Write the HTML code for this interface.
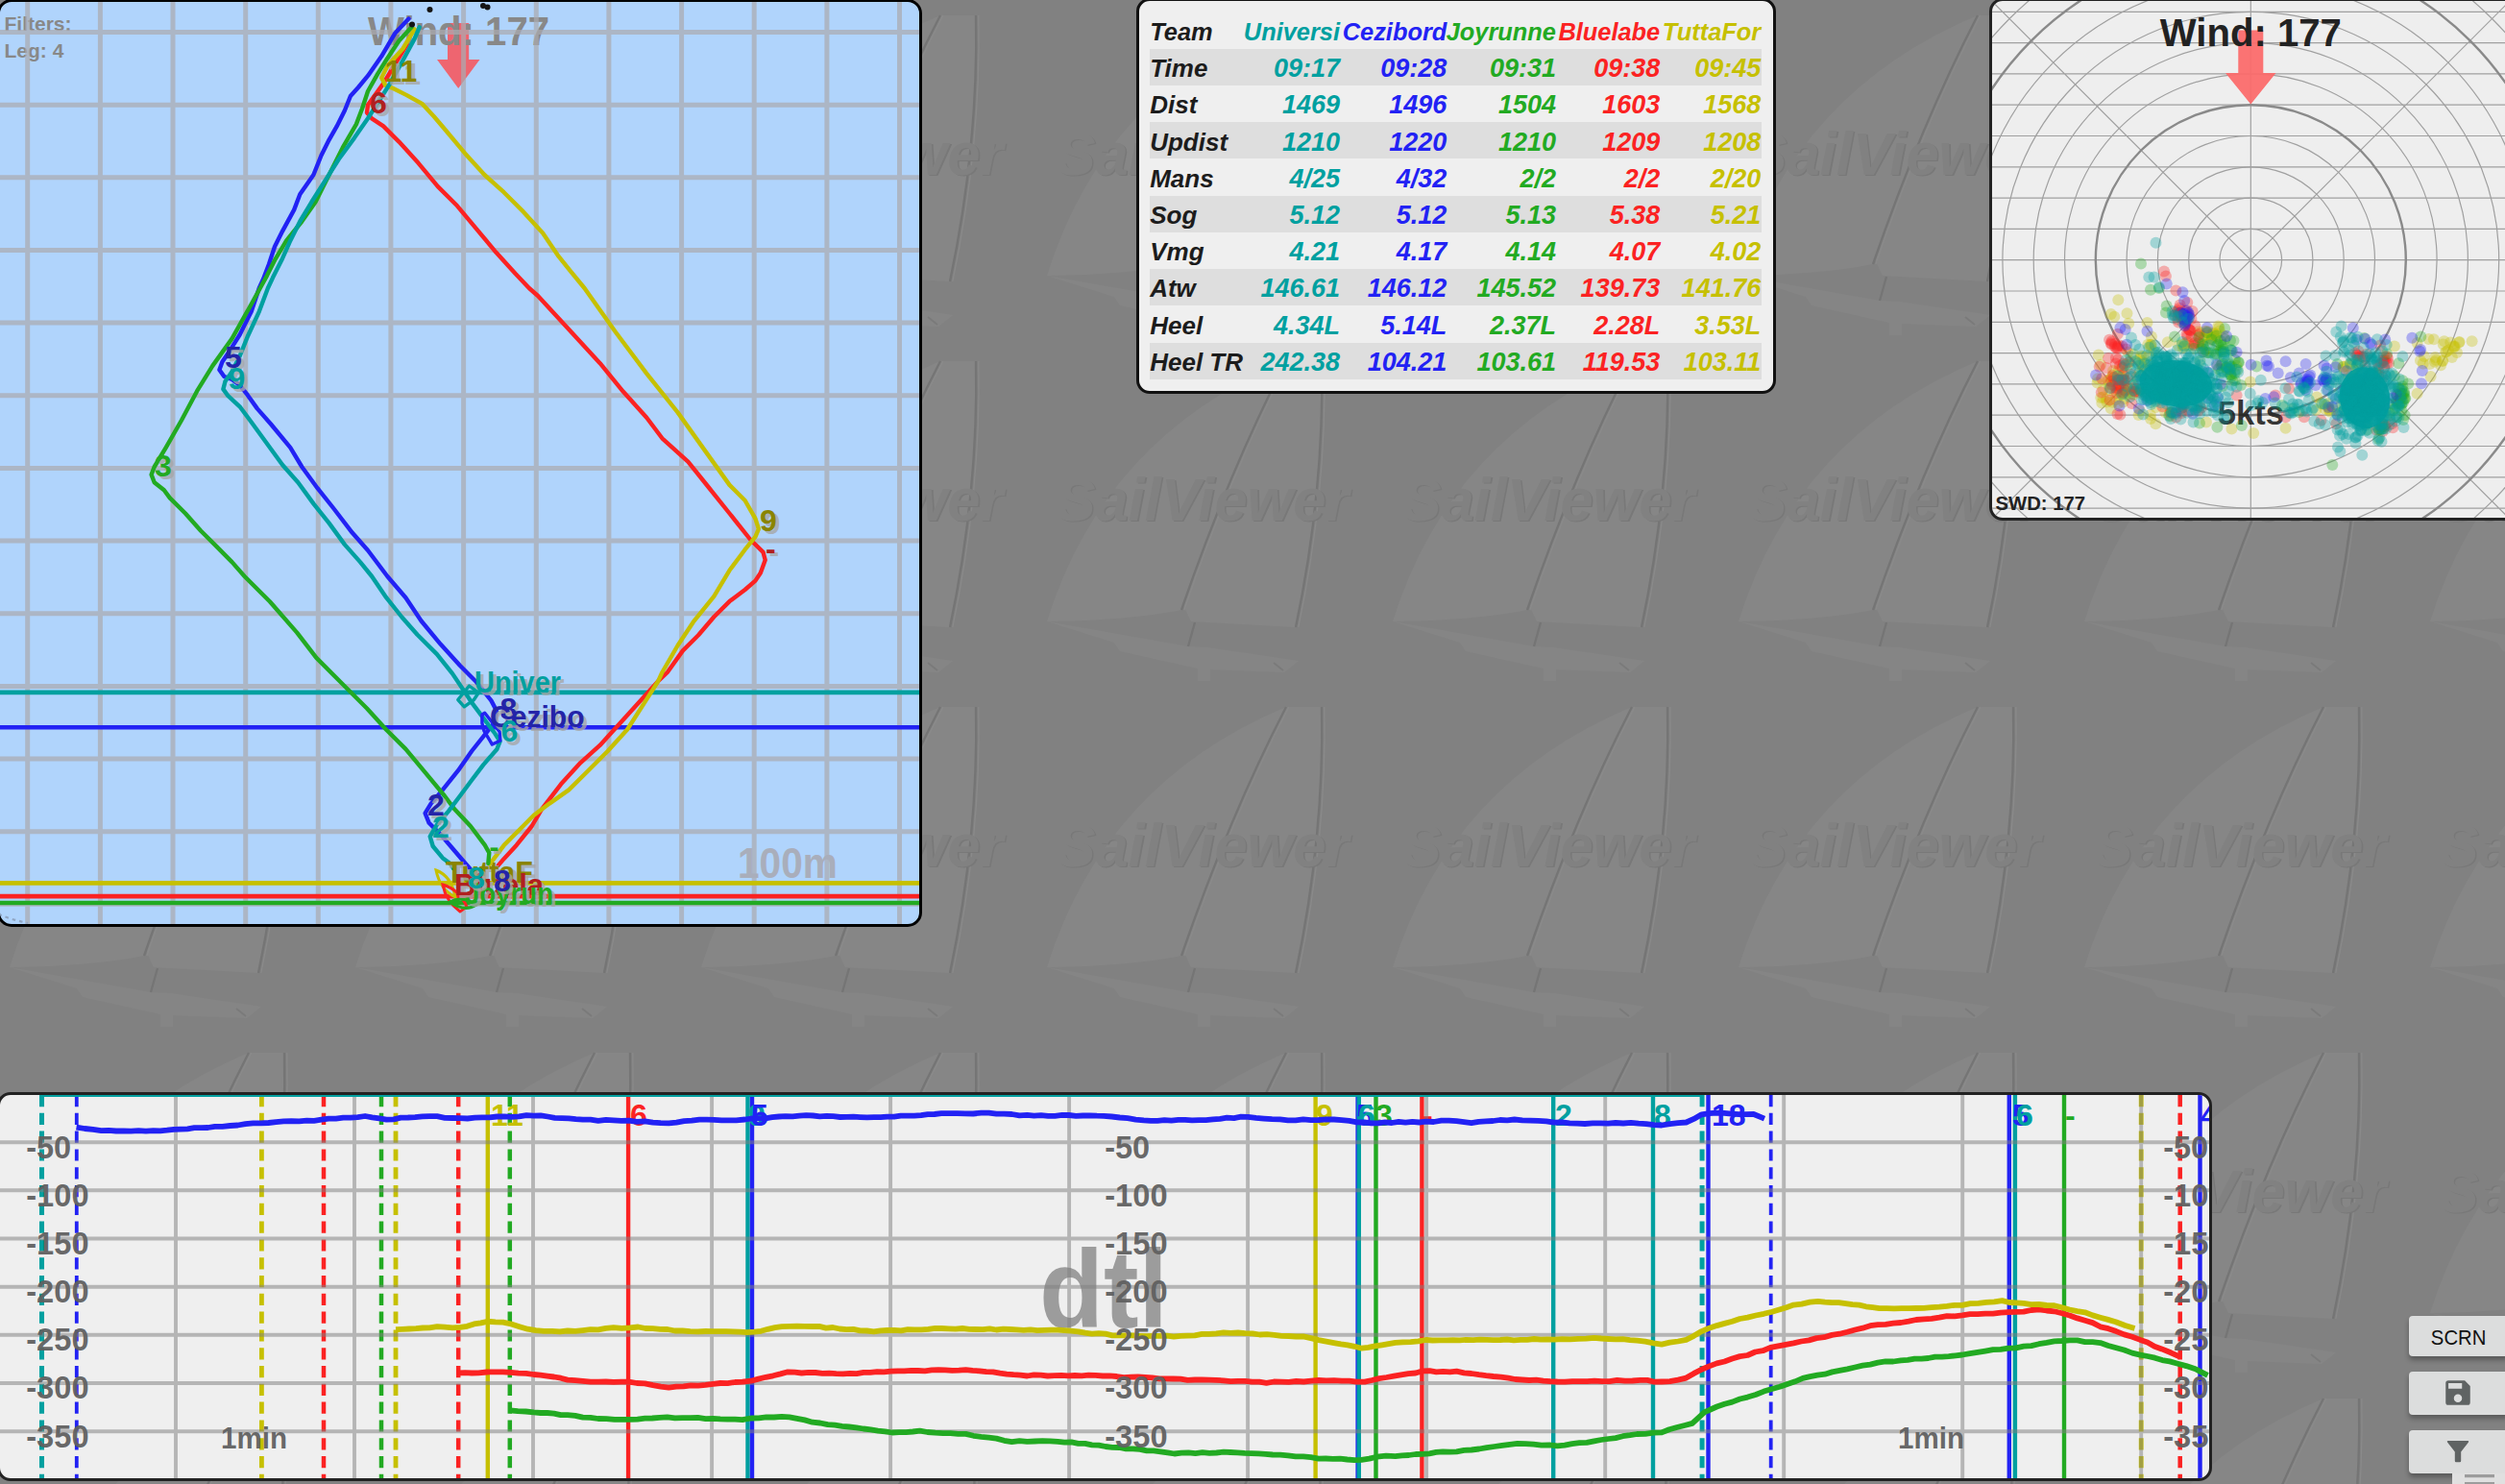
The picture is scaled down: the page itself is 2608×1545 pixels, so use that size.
<!DOCTYPE html>
<html lang="en"><head><meta charset="utf-8"><title>SailViewer</title>
<style>
html,body{margin:0;padding:0}
body{width:2608px;height:1545px;overflow:hidden;position:relative;background:#818181;font-family:"Liberation Sans",sans-serif}
.abs{position:absolute}
svg{position:absolute;left:0;top:0;overflow:hidden}
svg text{font-family:"Liberation Sans",sans-serif;font-weight:bold}
#map{left:-3px;top:-1px;width:957px;height:960px;border:3px solid #000;border-radius:15px;background:#b0d4fc;overflow:hidden}
#tbl{left:1182.5px;top:-2px;width:660px;height:405.5px;border:3px solid #111;border-radius:14px;background:#efefef;overflow:hidden;font-weight:bold;font-style:italic}
#pol{left:2071px;top:-2px;width:560px;height:538px;border:3px solid #222;border-radius:14px;background:#eeeeee;overflow:hidden}
#cht{left:-3px;top:1136.5px;width:2300px;height:399px;border:3px solid #222;border-radius:14px;background:#efefef;overflow:hidden}
.row{position:absolute;left:11.5px;width:637px;height:38.2px;line-height:38.2px;white-space:nowrap}
.row.s{background:#dedede}
.row span{position:absolute;top:1.4px;text-align:right;font-size:27px}
.row span.l{left:0.2px;text-align:left;font-size:26px;color:#1c1c1c}
.row.h span{font-size:25.4px}
.btn{position:absolute;left:2508px;width:104px;background:#dcdddd;border-radius:4px;box-shadow:0 4px 5px rgba(0,0,0,.3);text-align:center;color:#111}
</style></head><body>
<svg width="2608" height="1545" viewBox="0 0 2608 1545">
<defs><pattern id="wm" width="360" height="360" patternUnits="userSpaceOnUse">
<rect width="360" height="360" fill="#818181"/>
<path d="M259,16 Q70,95 10,287 Q95,286 150,275 Q200,130 259,16Z" fill="#868686"/>
<path d="M259,16 L296,16 Q299,150 269,293 L160,287 L152,270 Q200,130 259,16Z" fill="#868686"/>
<path d="M10,287 L80,309 L86,318 L167,336 L167,349 L180,349 L180,337 L257,340 L272,328 L177,314 L157,313Z" fill="#858585"/>
<path d="M260,16 Q201,130 151,275 M297,16 Q300,150 270,293" fill="none" stroke="#8a8a8a" stroke-width="1.2" transform="translate(1.8,0)"/>
<path d="M259,16 Q200,130 150,275 M296,16 Q299,150 269,293 M164,288 L157,313" fill="none" stroke="#757575" stroke-width="2.4"/>
<path d="M246,330 L256,338" fill="none" stroke="#7a7a7a" stroke-width="2"/>
<g transform="translate(19.5,182) scale(1,1.04)"><text x="1.6" y="1" font-size="61.4" font-style="italic" fill="#787878" style="font-weight:bold">SailViewer</text>
<text x="0" y="0" font-size="61.4" font-style="italic" fill="#818181" style="font-weight:bold">SailViewer</text></g>
</pattern></defs>
<rect width="2608" height="1545" fill="url(#wm)"/>
</svg>
<div id="map" class="abs"><svg width="960" height="965" viewBox="0 2 960 965" style="left:0;top:0"><path d="M466,24H488.2V62H499.5L477.2,92L455,62H466Z" fill="#ee6570"/><text x="383" y="47" font-size="42.5" fill="#888888" textLength="189" lengthAdjust="spacingAndGlyphs">Wind: 177</text><text x="4.5" y="31.5" font-size="21" fill="#888888">Filters:</text><text x="4.5" y="59.5" font-size="21" fill="#888888">Leg: 4</text><path d="M28.7,-5V970M-5,33.5H965M104.4,-5V970M-5,109.2H965M180.0,-5V970M-5,184.8H965M255.7,-5V970M-5,260.5H965M331.3,-5V970M-5,336.1H965M406.9,-5V970M-5,411.8H965M482.6,-5V970M-5,487.4H965M558.3,-5V970M-5,563.1H965M633.9,-5V970M-5,638.7H965M709.6,-5V970M-5,714.4H965M785.2,-5V970M-5,790.0H965M860.9,-5V970M-5,865.7H965M936.5,-5V970M-5,941.3H965" stroke="#aaaab0" stroke-opacity=".72" stroke-width="5" fill="none"/><text x="768" y="914" font-size="45" fill="#a9aebb" textLength="104" lengthAdjust="spacingAndGlyphs">100m</text><path d="M-5,720.9H965" stroke="#00a0a0" stroke-width="4.6"/><path d="M-5,757.3H965" stroke="#2222f4" stroke-width="4.6"/><path d="M-5,919.4H965" stroke="#c6c000" stroke-width="4.6"/><path d="M-5,933.1H965" stroke="#fb2222" stroke-width="4.6"/><path d="M-5,940H965" stroke="#22aa22" stroke-width="4.6"/><polyline points="425.5,19.6 411.4,34.4 397.2,58.6 383.0,78.9 373.0,91.0 364.9,100.0 358.8,115.2 350.7,131.4 342.6,145.6 334.5,161.7 326.4,182.0 312.3,202.2 306.2,218.4 294.1,240.6 286.0,256.8 280.0,275.0 273.9,291.0 269.8,300.0 261.7,324.3 249.6,348.5 239.5,364.7 231.4,376.8 228.4,384.9 233.4,392.0 241.5,395.0 249.6,401.1 257.7,411.2 267.8,425.4 282.0,441.5 302.2,465.8 314.3,486.0 330.5,508.2 346.7,528.5 366.9,554.8 383.0,573.0 403.3,600.0 422.4,622.2 438.6,646.5 458.8,670.8 479.0,693.0 495.2,709.2 511.4,729.4 517.0,740.0 515.0,752.0 507.3,761.7 491.1,782.0 477.0,802.2 460.8,822.4 448.7,836.6 442.6,846.7 446.7,856.8 458.8,868.9 470.9,883.0 483.1,897.2 489.8,904.9" fill="none" stroke="#2222f4" stroke-width="4.4" stroke-linejoin="round" stroke-linecap="round"/><polyline points="423.5,46.5 399.2,86.9 383.0,109.2 382.0,117.3 387.1,123.3 399.2,131.4 415.4,147.6 435.6,169.8 455.8,194.1 476.0,214.3 496.3,238.6 516.5,262.8 536.7,285.1 550.9,300.0 560.0,308.0 592.3,343.1 624.7,378.2 648.9,407.8 673.2,434.8 689.4,456.3 716.3,480.6 737.9,507.5 759.5,534.5 781.0,561.5 794.5,574.9 796.7,583.0 791.8,596.5 786.4,604.6 775.6,614.0 759.5,626.1 743.3,642.3 727.1,661.2 710.9,677.4 694.8,700.0 685.2,709.2 665.0,731.4 644.8,753.7 624.6,775.9 604.4,794.1 584.1,816.3 563.9,842.6 553.7,860.0 537.7,879.9 524.8,893.9 518.8,900.9" fill="none" stroke="#fb2222" stroke-width="4.4" stroke-linejoin="round" stroke-linecap="round"/><polyline points="431.6,30.3 419.5,50.5 403.3,68.7 397.2,80.9 401.3,89.0 409.3,92.0 423.5,99.1 439.7,108.2 451.8,121.3 463.9,135.5 484.1,159.7 504.4,182.0 524.6,200.2 544.8,220.4 565.0,242.6 581.6,266.9 593.6,281.9 608.5,300.0 640.9,345.8 673.2,388.9 705.6,429.4 732.5,467.1 759.5,504.9 775.6,521.0 786.4,539.9 789.9,550.7 786.4,558.8 775.6,572.2 759.5,593.8 743.3,620.8 721.7,647.7 705.6,672.0 689.4,700.0 685.2,709.2 671.1,731.4 652.9,759.7 632.7,782.0 612.5,802.2 592.2,822.4 572.0,836.6 555.8,848.7 544.7,860.0 524.8,879.9 509.8,899.9" fill="none" stroke="#c6c000" stroke-width="4.4" stroke-linejoin="round" stroke-linecap="round"/><polyline points="428.5,28.3 415.4,42.5 403.3,60.7 393.2,76.8 383.0,95.0 377.0,113.2 370.9,129.4 356.8,153.7 342.6,182.0 328.5,210.3 314.3,230.5 298.1,250.7 286.0,270.9 277.9,287.1 270.8,300.0 259.7,320.2 241.5,352.6 221.3,380.9 205.1,407.2 189.0,437.5 172.8,465.8 160.7,486.0 157.6,494.1 160.7,502.2 170.8,510.3 176.8,518.4 193.0,534.5 209.2,552.7 225.4,568.9 241.5,585.1 254.6,600.0 280.9,626.3 309.2,658.6 329.4,684.9 357.7,713.2 382.0,737.5 402.2,759.7 422.4,779.9 442.6,804.2 462.8,828.5 472.9,842.0 489.8,860.0 504.8,879.9 509.3,887.9 508.3,898.9" fill="none" stroke="#22aa22" stroke-width="4.4" stroke-linejoin="round" stroke-linecap="round"/><polyline points="436.6,28.3 431.6,40.4 419.5,62.7 407.3,84.9 397.2,101.1 383.0,123.3 368.9,143.6 352.7,165.8 338.6,188.0 324.4,210.3 312.3,230.5 302.2,250.7 294.1,268.9 284.0,289.1 278.9,300.0 269.8,324.3 257.7,350.5 249.6,370.8 241.5,386.9 234.5,397.0 232.4,405.1 237.5,412.2 249.6,423.3 261.7,439.5 277.9,461.7 294.1,484.0 310.3,502.2 326.4,524.4 342.6,544.6 358.8,566.9 375.0,585.1 387.1,600.0 402.2,622.2 418.4,642.5 434.5,660.7 454.7,680.9 470.9,701.1 483.1,719.3 491.1,731.4 503.3,747.6 515.4,763.8 520.5,771.9 517.4,780.0 503.3,796.1 491.1,812.3 479.0,828.5 466.9,844.6 454.7,858.8 447.7,870.9 450.7,881.0 460.8,893.2 469.9,899.9 471.9,903.9" fill="none" stroke="#00a0a0" stroke-width="4.4" stroke-linejoin="round" stroke-linecap="round"/><path d="M476.8,728.5 L488.5,714 L498.2,721.2 L493.4,728.5 L483.3,735.8Z" fill="none" stroke="#00a0a0" stroke-width="3.4" stroke-linejoin="round"/><path d="M501.9,743.9 L504.7,742.3 L520.1,761.7 L520.9,771 L512.4,775 L503.9,760.9 L501.9,752.8Z" fill="none" stroke="#2222f4" stroke-width="3.4" stroke-linejoin="round"/><path d="M454,906 Q470,912 474,934 Q458,926 454,906Z" fill="none" stroke="#c6c000" stroke-width="3"/><path d="M461,921 Q478,926 486,944 L479,949 Q464,938 461,921Z" fill="none" stroke="#fb2222" stroke-width="3"/><path d="M468,939 Q482,932 496,942 Q484,950 468,939Z" fill="none" stroke="#22aa22" stroke-width="3"/><path d="M-1.5,951.8 Q12,957.5 29,961" fill="none" stroke="#90a6c4" stroke-width="2.2" stroke-dasharray="3.6 4"/><circle cx="447.5" cy="10" r="3" fill="#151515"/><circle cx="503" cy="6" r="3" fill="#151515"/><circle cx="507.5" cy="7.5" r="3" fill="#151515"/><circle cx="429" cy="25.5" r="3" fill="#151515"/><text x="404.1" y="88.4" font-size="32" fill="#a6a6a6" fill-opacity=".8">11</text><text x="400.5" y="85" font-size="32" fill="#8a8400">11</text><text x="388.6" y="121.4" font-size="32" fill="#a6a6a6" fill-opacity=".8">6</text><text x="385" y="118" font-size="32" fill="#b02020">6</text><text x="237.6" y="386.4" font-size="32" fill="#a6a6a6" fill-opacity=".8">5</text><text x="234" y="383" font-size="32" fill="#2424a8">5</text><text x="241.1" y="408.4" font-size="32" fill="#a6a6a6" fill-opacity=".8">9</text><text x="237.5" y="405" font-size="32" fill="#00a0a0">9</text><text x="164.6" y="499.4" font-size="32" fill="#a6a6a6" fill-opacity=".8">3</text><text x="161" y="496" font-size="32" fill="#22aa22">3</text><text x="794.6" y="556.4" font-size="32" fill="#a6a6a6" fill-opacity=".8">9</text><text x="791" y="553" font-size="32" fill="#8a8400">9</text><text x="800.6" y="585.4" font-size="32" fill="#a6a6a6" fill-opacity=".8">-</text><text x="797" y="582" font-size="32" fill="#b02020">-</text><text x="497.6" y="724.4" font-size="31" fill="#a6a6a6" fill-opacity=".8" textLength="90" lengthAdjust="spacingAndGlyphs">Univer</text><text x="494" y="721" font-size="31" fill="#00a0a0" textLength="90" lengthAdjust="spacingAndGlyphs">Univer</text><text x="524.1" y="752.4" font-size="32" fill="#a6a6a6" fill-opacity=".8">8</text><text x="520.5" y="749" font-size="32" fill="#2424a8">8</text><text x="513.6" y="760.6" font-size="31" fill="#a6a6a6" fill-opacity=".8" textLength="98.5" lengthAdjust="spacingAndGlyphs">Cezibo</text><text x="510" y="757.2" font-size="31" fill="#2424a8" textLength="98.5" lengthAdjust="spacingAndGlyphs">Cezibo</text><text x="525.1" y="775.6999999999999" font-size="32" fill="#a6a6a6" fill-opacity=".8">6</text><text x="521.5" y="772.3" font-size="32" fill="#00a0a0">6</text><text x="448.6" y="852.4" font-size="32" fill="#a6a6a6" fill-opacity=".8">2</text><text x="445" y="849" font-size="32" fill="#2424a8">2</text><text x="453.6" y="875.4" font-size="32" fill="#a6a6a6" fill-opacity=".8">2</text><text x="450" y="872" font-size="32" fill="#00a0a0">2</text><text x="513.1" y="895.4" font-size="30" fill="#a6a6a6" fill-opacity=".8">-</text><text x="509.5" y="892" font-size="30" fill="#22aa22">-</text><text x="467.6" y="922.4" font-size="31" fill="#a6a6a6" fill-opacity=".8" textLength="91" lengthAdjust="spacingAndGlyphs">TuttaF</text><text x="464" y="919" font-size="31" fill="#8a8400" textLength="91" lengthAdjust="spacingAndGlyphs">TuttaF</text><text x="476.6" y="935.4" font-size="31" fill="#a6a6a6" fill-opacity=".8" textLength="93" lengthAdjust="spacingAndGlyphs">Bluela</text><text x="473" y="932" font-size="31" fill="#b02020" textLength="93" lengthAdjust="spacingAndGlyphs">Bluela</text><text x="487.6" y="944.4" font-size="31" fill="#a6a6a6" fill-opacity=".8" textLength="92" lengthAdjust="spacingAndGlyphs">Joyrun</text><text x="484" y="941" font-size="31" fill="#22aa22" textLength="92" lengthAdjust="spacingAndGlyphs">Joyrun</text><text x="490.6" y="928.4" font-size="32" fill="#a6a6a6" fill-opacity=".8">8</text><text x="487" y="925" font-size="32" fill="#00a0a0">8</text><text x="517.6" y="931.4" font-size="32" fill="#a6a6a6" fill-opacity=".8">8</text><text x="514" y="928" font-size="32" fill="#2424a8">8</text></svg></div>
<div id="tbl" class="abs"><div class="row h" style="top:11.7px"><span class="l">Team</span><span style="right:439.0px;color:#00a0a0">Universi</span><span style="right:327.7px;color:#2222f4">Cezibord</span><span style="right:214.0px;color:#22aa22">Joyrunne</span><span style="right:105.8px;color:#fb2222">Bluelabe</span><span style="right:0.8px;color:#c6c000">TuttaFor</span></div><div class="row s" style="top:49.9px"><span class="l">Time</span><span style="right:439.0px;color:#00a0a0">09:17</span><span style="right:327.7px;color:#2222f4">09:28</span><span style="right:214.0px;color:#22aa22">09:31</span><span style="right:105.8px;color:#fb2222">09:38</span><span style="right:0.8px;color:#c6c000">09:45</span></div><div class="row" style="top:88.1px"><span class="l">Dist</span><span style="right:439.0px;color:#00a0a0">1469</span><span style="right:327.7px;color:#2222f4">1496</span><span style="right:214.0px;color:#22aa22">1504</span><span style="right:105.8px;color:#fb2222">1603</span><span style="right:0.8px;color:#c6c000">1568</span></div><div class="row s" style="top:126.3px"><span class="l">Updist</span><span style="right:439.0px;color:#00a0a0">1210</span><span style="right:327.7px;color:#2222f4">1220</span><span style="right:214.0px;color:#22aa22">1210</span><span style="right:105.8px;color:#fb2222">1209</span><span style="right:0.8px;color:#c6c000">1208</span></div><div class="row" style="top:164.5px"><span class="l">Mans</span><span style="right:439.0px;color:#00a0a0">4/25</span><span style="right:327.7px;color:#2222f4">4/32</span><span style="right:214.0px;color:#22aa22">2/2</span><span style="right:105.8px;color:#fb2222">2/2</span><span style="right:0.8px;color:#c6c000">2/20</span></div><div class="row s" style="top:202.7px"><span class="l">Sog</span><span style="right:439.0px;color:#00a0a0">5.12</span><span style="right:327.7px;color:#2222f4">5.12</span><span style="right:214.0px;color:#22aa22">5.13</span><span style="right:105.8px;color:#fb2222">5.38</span><span style="right:0.8px;color:#c6c000">5.21</span></div><div class="row" style="top:240.9px"><span class="l">Vmg</span><span style="right:439.0px;color:#00a0a0">4.21</span><span style="right:327.7px;color:#2222f4">4.17</span><span style="right:214.0px;color:#22aa22">4.14</span><span style="right:105.8px;color:#fb2222">4.07</span><span style="right:0.8px;color:#c6c000">4.02</span></div><div class="row s" style="top:279.1px"><span class="l">Atw</span><span style="right:439.0px;color:#00a0a0">146.61</span><span style="right:327.7px;color:#2222f4">146.12</span><span style="right:214.0px;color:#22aa22">145.52</span><span style="right:105.8px;color:#fb2222">139.73</span><span style="right:0.8px;color:#c6c000">141.76</span></div><div class="row" style="top:317.3px"><span class="l">Heel</span><span style="right:439.0px;color:#00a0a0">4.34L</span><span style="right:327.7px;color:#2222f4">5.14L</span><span style="right:214.0px;color:#22aa22">2.37L</span><span style="right:105.8px;color:#fb2222">2.28L</span><span style="right:0.8px;color:#c6c000">3.53L</span></div><div class="row s" style="top:355.5px"><span class="l">Heel TR</span><span style="right:439.0px;color:#00a0a0">242.38</span><span style="right:327.7px;color:#2222f4">104.21</span><span style="right:214.0px;color:#22aa22">103.61</span><span style="right:105.8px;color:#fb2222">119.53</span><span style="right:0.8px;color:#c6c000">103.11</span></div></div>
<div id="pol" class="abs"><svg width="560" height="540" viewBox="2074 1 560 540"><g fill="none" stroke="#a0a0a0" stroke-width="1.2"><circle cx="2343.3" cy="270.7" r="32.3"/><circle cx="2343.3" cy="270.7" r="64.6"/><circle cx="2343.3" cy="270.7" r="96.9"/><circle cx="2343.3" cy="270.7" r="129.2"/><circle cx="2343.3" cy="270.7" r="193.8"/><circle cx="2343.3" cy="270.7" r="226.1"/><circle cx="2343.3" cy="270.7" r="258.4"/><circle cx="2343.3" cy="270.7" r="290.7"/><circle cx="2343.3" cy="270.7" r="355.3"/><circle cx="2343.3" cy="270.7" r="387.6"/><circle cx="2343.3" cy="270.7" r="419.9"/><path d="M2070,-20.0H2640M2070,12.3H2640M2070,44.6H2640M2070,76.9H2640M2070,109.2H2640M2070,141.5H2640M2070,173.8H2640M2070,206.1H2640M2070,238.4H2640M2070,270.7H2640M2070,303.0H2640M2070,335.3H2640M2070,367.6H2640M2070,399.9H2640M2070,432.2H2640M2070,464.5H2640M2070,496.8H2640M2070,529.1H2640M2070,561.4H2640M2343.3,-5V545M1943.3000000000002,-129.3L2743.3,670.7M1943.3000000000002,670.7L2743.3,-129.3"/></g><g fill="none" stroke="#8a8a8a" stroke-width="2.4"><circle cx="2343.3" cy="270.7" r="161.5"/><circle cx="2343.3" cy="270.7" r="323.0"/></g><text x="2343.3" y="441.5" font-size="34.5" fill="#1c1c1c" fill-opacity=".9" text-anchor="middle">5kts</text><g fill="#c6c000" fill-opacity=".32"><circle cx="2205.3" cy="312.2" r="6"/><circle cx="2197.8" cy="327.1" r="6"/><circle cx="2214.5" cy="326.3" r="6"/><circle cx="2201.3" cy="329.8" r="6"/><circle cx="2216.2" cy="336.8" r="6"/><circle cx="2235.5" cy="335.9" r="6"/><circle cx="2239.0" cy="358.8" r="6"/><circle cx="2242.6" cy="365.8" r="6"/><circle cx="2239.0" cy="436.1" r="6"/><circle cx="2244.3" cy="441.3" r="6"/><circle cx="2297.0" cy="439.6" r="6"/><circle cx="2323.4" cy="446.6" r="6"/><circle cx="2346.2" cy="451.0" r="6"/><circle cx="2379.6" cy="445.7" r="6"/><circle cx="2328.6" cy="380.7" r="6"/><circle cx="2342.7" cy="397.4" r="6"/><circle cx="2492.9" cy="360.5" r="6"/><circle cx="2516.6" cy="357.0" r="6"/><circle cx="2530.6" cy="392.1" r="6"/><circle cx="2516.6" cy="409.7" r="6"/><circle cx="2485.0" cy="434.3" r="6"/><circle cx="2502.5" cy="415.0" r="6"/><circle cx="2193.4" cy="418.5" r="6"/><circle cx="2202.1" cy="409.4" r="6"/><circle cx="2202.4" cy="398.5" r="6"/><circle cx="2195.0" cy="399.9" r="6"/><circle cx="2216.5" cy="408.3" r="6"/><circle cx="2215.7" cy="406.0" r="6"/><circle cx="2209.0" cy="405.1" r="6"/><circle cx="2187.2" cy="413.9" r="6"/><circle cx="2210.1" cy="409.3" r="6"/><circle cx="2187.0" cy="379.7" r="6"/><circle cx="2195.4" cy="396.5" r="6"/><circle cx="2208.0" cy="402.1" r="6"/><circle cx="2210.3" cy="394.2" r="6"/><circle cx="2208.0" cy="407.9" r="6"/><circle cx="2197.8" cy="425.3" r="6"/><circle cx="2210.7" cy="418.4" r="6"/><circle cx="2198.3" cy="392.9" r="6"/><circle cx="2201.2" cy="401.3" r="6"/><circle cx="2211.5" cy="406.0" r="6"/><circle cx="2200.1" cy="390.1" r="6"/><circle cx="2199.3" cy="418.8" r="6"/><circle cx="2196.3" cy="405.9" r="6"/><circle cx="2209.3" cy="383.1" r="6"/><circle cx="2205.3" cy="419.9" r="6"/><circle cx="2183.6" cy="398.4" r="6"/><circle cx="2203.7" cy="391.9" r="6"/><circle cx="2210.0" cy="401.9" r="6"/><circle cx="2189.4" cy="413.6" r="6"/><circle cx="2211.8" cy="415.1" r="6"/><circle cx="2220.0" cy="407.5" r="6"/><circle cx="2206.0" cy="385.6" r="6"/><circle cx="2211.3" cy="394.6" r="6"/><circle cx="2200.0" cy="386.0" r="6"/><circle cx="2194.6" cy="395.7" r="6"/><circle cx="2218.4" cy="375.9" r="6"/><circle cx="2189.4" cy="405.8" r="6"/><circle cx="2220.0" cy="410.3" r="6"/><circle cx="2184.8" cy="369.5" r="6"/><circle cx="2208.6" cy="393.0" r="6"/><circle cx="2193.0" cy="415.6" r="6"/><circle cx="2216.4" cy="404.8" r="6"/><circle cx="2207.4" cy="408.4" r="6"/><circle cx="2221.6" cy="410.8" r="6"/><circle cx="2210.3" cy="409.9" r="6"/><circle cx="2188.3" cy="419.6" r="6"/><circle cx="2214.9" cy="409.7" r="6"/><circle cx="2184.0" cy="394.3" r="6"/><circle cx="2213.7" cy="378.8" r="6"/><circle cx="2202.9" cy="416.1" r="6"/><circle cx="2291.3" cy="357.2" r="6"/><circle cx="2304.4" cy="346.4" r="6"/><circle cx="2302.8" cy="351.3" r="6"/><circle cx="2301.4" cy="354.4" r="6"/><circle cx="2295.9" cy="344.8" r="6"/><circle cx="2307.8" cy="347.5" r="6"/><circle cx="2294.3" cy="353.2" r="6"/><circle cx="2310.8" cy="344.6" r="6"/><circle cx="2290.8" cy="346.5" r="6"/><circle cx="2299.5" cy="345.5" r="6"/><circle cx="2310.4" cy="341.0" r="6"/><circle cx="2309.4" cy="339.6" r="6"/><circle cx="2295.0" cy="351.2" r="6"/><circle cx="2308.5" cy="352.6" r="6"/><circle cx="2302.9" cy="348.2" r="6"/><circle cx="2301.6" cy="350.9" r="6"/><circle cx="2299.3" cy="349.1" r="6"/><circle cx="2304.5" cy="347.4" r="6"/><circle cx="2305.9" cy="350.8" r="6"/><circle cx="2314.7" cy="349.3" r="6"/><circle cx="2297.5" cy="345.1" r="6"/><circle cx="2300.4" cy="353.0" r="6"/><circle cx="2273.6" cy="360.8" r="6"/><circle cx="2288.8" cy="345.3" r="6"/><circle cx="2268.0" cy="360.1" r="6"/><circle cx="2278.7" cy="360.0" r="6"/><circle cx="2272.9" cy="362.2" r="6"/><circle cx="2277.9" cy="356.0" r="6"/><circle cx="2293.0" cy="360.6" r="6"/><circle cx="2272.0" cy="358.2" r="6"/><circle cx="2274.3" cy="358.4" r="6"/><circle cx="2256.8" cy="356.2" r="6"/><circle cx="2239.1" cy="361.1" r="6"/><circle cx="2229.7" cy="376.0" r="6"/><circle cx="2237.8" cy="379.8" r="6"/><circle cx="2215.3" cy="366.8" r="6"/><circle cx="2227.3" cy="373.7" r="6"/><circle cx="2239.9" cy="350.5" r="6"/><circle cx="2239.8" cy="359.1" r="6"/><circle cx="2236.3" cy="358.8" r="6"/><circle cx="2231.8" cy="377.7" r="6"/><circle cx="2229.0" cy="370.6" r="6"/><circle cx="2237.3" cy="370.3" r="6"/><circle cx="2229.5" cy="380.1" r="6"/><circle cx="2555.7" cy="360.5" r="6"/><circle cx="2573.6" cy="355.2" r="6"/><circle cx="2554.3" cy="360.6" r="6"/><circle cx="2546.1" cy="366.6" r="6"/><circle cx="2547.0" cy="366.2" r="6"/><circle cx="2528.6" cy="353.0" r="6"/><circle cx="2551.2" cy="356.4" r="6"/><circle cx="2533.9" cy="353.2" r="6"/><circle cx="2558.0" cy="366.9" r="6"/><circle cx="2560.2" cy="356.5" r="6"/><circle cx="2544.7" cy="355.3" r="6"/><circle cx="2552.8" cy="372.1" r="6"/><circle cx="2535.3" cy="371.9" r="6"/><circle cx="2555.1" cy="361.2" r="6"/><circle cx="2523.9" cy="370.9" r="6"/><circle cx="2543.7" cy="358.6" r="6"/><circle cx="2548.9" cy="364.8" r="6"/><circle cx="2560.5" cy="356.0" r="6"/><circle cx="2541.1" cy="380.3" r="6"/><circle cx="2543.1" cy="375.9" r="6"/><circle cx="2529.6" cy="379.0" r="6"/><circle cx="2534.9" cy="376.7" r="6"/><circle cx="2542.9" cy="375.6" r="6"/><circle cx="2520.0" cy="375.3" r="6"/><circle cx="2522.7" cy="378.5" r="6"/><circle cx="2536.1" cy="374.7" r="6"/><circle cx="2425.2" cy="425.4" r="6"/><circle cx="2425.8" cy="428.4" r="6"/><circle cx="2424.8" cy="426.6" r="6"/><circle cx="2435.7" cy="430.1" r="6"/><circle cx="2420.5" cy="425.7" r="6"/><circle cx="2412.1" cy="413.6" r="6"/><circle cx="2411.4" cy="426.8" r="6"/><circle cx="2416.6" cy="420.2" r="6"/><circle cx="2423.9" cy="420.1" r="6"/><circle cx="2421.1" cy="421.7" r="6"/><circle cx="2437.8" cy="420.5" r="6"/><circle cx="2429.0" cy="426.4" r="6"/><circle cx="2447.0" cy="378.5" r="6"/><circle cx="2445.1" cy="390.8" r="6"/><circle cx="2439.4" cy="382.0" r="6"/><circle cx="2453.4" cy="389.3" r="6"/><circle cx="2448.1" cy="389.4" r="6"/><circle cx="2448.9" cy="378.9" r="6"/><circle cx="2439.8" cy="381.7" r="6"/><circle cx="2452.9" cy="382.1" r="6"/><circle cx="2443.3" cy="381.1" r="6"/><circle cx="2440.0" cy="384.5" r="6"/><circle cx="2238.9" cy="432.1" r="6"/><circle cx="2226.5" cy="431.9" r="6"/><circle cx="2244.6" cy="424.0" r="6"/><circle cx="2259.0" cy="429.8" r="6"/><circle cx="2227.8" cy="427.7" r="6"/><circle cx="2254.4" cy="429.2" r="6"/><circle cx="2259.6" cy="433.4" r="6"/><circle cx="2258.4" cy="431.9" r="6"/><circle cx="2227.3" cy="388.0" r="6"/><circle cx="2221.1" cy="368.7" r="6"/><circle cx="2224.3" cy="392.6" r="6"/><circle cx="2215.9" cy="380.1" r="6"/><circle cx="2231.6" cy="371.0" r="6"/><circle cx="2221.3" cy="400.4" r="6"/><circle cx="2211.4" cy="388.2" r="6"/><circle cx="2231.2" cy="382.5" r="6"/></g><g fill="#fb2222" fill-opacity=".32"><circle cx="2253.1" cy="282.4" r="6"/><circle cx="2254.9" cy="287.6" r="6"/><circle cx="2265.4" cy="302.6" r="6"/><circle cx="2328.6" cy="411.5" r="6"/><circle cx="2369.0" cy="411.5" r="6"/><circle cx="2383.1" cy="404.4" r="6"/><circle cx="2379.6" cy="434.3" r="6"/><circle cx="2398.9" cy="434.3" r="6"/><circle cx="2416.5" cy="437.8" r="6"/><circle cx="2432.3" cy="441.3" r="6"/><circle cx="2204.5" cy="362.6" r="6"/><circle cx="2198.3" cy="358.4" r="6"/><circle cx="2203.4" cy="362.2" r="6"/><circle cx="2202.0" cy="357.9" r="6"/><circle cx="2197.9" cy="357.3" r="6"/><circle cx="2205.9" cy="359.2" r="6"/><circle cx="2198.6" cy="355.2" r="6"/><circle cx="2213.4" cy="363.6" r="6"/><circle cx="2204.8" cy="347.8" r="6"/><circle cx="2204.8" cy="360.8" r="6"/><circle cx="2209.3" cy="360.6" r="6"/><circle cx="2201.9" cy="361.0" r="6"/><circle cx="2187.8" cy="408.4" r="6"/><circle cx="2209.7" cy="382.5" r="6"/><circle cx="2219.4" cy="420.0" r="6"/><circle cx="2193.0" cy="383.1" r="6"/><circle cx="2209.4" cy="395.8" r="6"/><circle cx="2202.7" cy="378.5" r="6"/><circle cx="2227.0" cy="408.5" r="6"/><circle cx="2195.0" cy="372.9" r="6"/><circle cx="2223.0" cy="407.8" r="6"/><circle cx="2224.1" cy="405.1" r="6"/><circle cx="2198.1" cy="396.9" r="6"/><circle cx="2185.7" cy="381.8" r="6"/><circle cx="2206.0" cy="400.8" r="6"/><circle cx="2199.5" cy="391.2" r="6"/><circle cx="2211.0" cy="398.6" r="6"/><circle cx="2212.7" cy="396.1" r="6"/><circle cx="2203.4" cy="404.8" r="6"/><circle cx="2207.0" cy="380.7" r="6"/><circle cx="2200.5" cy="393.0" r="6"/><circle cx="2205.5" cy="395.4" r="6"/><circle cx="2206.5" cy="395.6" r="6"/><circle cx="2205.3" cy="374.2" r="6"/><circle cx="2210.6" cy="408.8" r="6"/><circle cx="2210.7" cy="390.2" r="6"/><circle cx="2210.9" cy="378.6" r="6"/><circle cx="2188.2" cy="393.9" r="6"/><circle cx="2197.6" cy="404.1" r="6"/><circle cx="2196.1" cy="353.8" r="6"/><circle cx="2196.5" cy="416.6" r="6"/><circle cx="2202.9" cy="372.6" r="6"/><circle cx="2199.2" cy="400.8" r="6"/><circle cx="2211.3" cy="395.7" r="6"/><circle cx="2220.9" cy="403.6" r="6"/><circle cx="2206.3" cy="401.9" r="6"/><circle cx="2222.5" cy="407.5" r="6"/><circle cx="2216.4" cy="376.9" r="6"/><circle cx="2205.1" cy="403.9" r="6"/><circle cx="2203.7" cy="409.0" r="6"/><circle cx="2212.3" cy="406.6" r="6"/><circle cx="2204.5" cy="431.0" r="6"/><circle cx="2218.5" cy="389.8" r="6"/><circle cx="2207.4" cy="431.8" r="6"/><circle cx="2271.7" cy="331.6" r="6"/><circle cx="2268.0" cy="335.4" r="6"/><circle cx="2268.4" cy="326.8" r="6"/><circle cx="2274.8" cy="332.2" r="6"/><circle cx="2268.9" cy="320.7" r="6"/><circle cx="2264.6" cy="325.1" r="6"/><circle cx="2279.1" cy="343.5" r="6"/><circle cx="2283.4" cy="358.2" r="6"/><circle cx="2294.2" cy="366.3" r="6"/><circle cx="2289.6" cy="348.0" r="6"/><circle cx="2281.6" cy="350.2" r="6"/><circle cx="2288.9" cy="357.2" r="6"/><circle cx="2281.4" cy="332.0" r="6"/><circle cx="2276.4" cy="348.0" r="6"/><circle cx="2280.4" cy="343.8" r="6"/><circle cx="2267.6" cy="323.1" r="6"/><circle cx="2269.6" cy="317.4" r="6"/><circle cx="2275.0" cy="339.5" r="6"/><circle cx="2285.3" cy="339.2" r="6"/><circle cx="2277.3" cy="349.8" r="6"/><circle cx="2288.4" cy="349.4" r="6"/><circle cx="2273.7" cy="330.7" r="6"/><circle cx="2285.1" cy="356.9" r="6"/><circle cx="2284.5" cy="359.7" r="6"/><circle cx="2272.9" cy="330.9" r="6"/><circle cx="2278.7" cy="342.8" r="6"/><circle cx="2267.3" cy="332.7" r="6"/><circle cx="2270.9" cy="330.9" r="6"/><circle cx="2264.4" cy="328.2" r="6"/><circle cx="2280.0" cy="343.9" r="6"/><circle cx="2267.5" cy="324.9" r="6"/><circle cx="2270.3" cy="325.9" r="6"/><circle cx="2274.7" cy="323.6" r="6"/><circle cx="2282.6" cy="324.0" r="6"/><circle cx="2277.3" cy="325.9" r="6"/><circle cx="2277.3" cy="315.0" r="6"/><circle cx="2269.1" cy="326.5" r="6"/><circle cx="2275.1" cy="335.7" r="6"/><circle cx="2273.8" cy="331.0" r="6"/><circle cx="2275.8" cy="329.6" r="6"/><circle cx="2481.9" cy="377.0" r="6"/><circle cx="2481.9" cy="370.5" r="6"/><circle cx="2484.9" cy="370.9" r="6"/><circle cx="2480.8" cy="393.0" r="6"/><circle cx="2478.7" cy="378.2" r="6"/><circle cx="2484.8" cy="378.3" r="6"/><circle cx="2476.1" cy="379.9" r="6"/><circle cx="2482.2" cy="383.1" r="6"/><circle cx="2476.3" cy="390.4" r="6"/><circle cx="2487.0" cy="378.2" r="6"/><circle cx="2480.9" cy="375.1" r="6"/><circle cx="2485.9" cy="373.1" r="6"/><circle cx="2482.7" cy="374.7" r="6"/><circle cx="2476.6" cy="383.1" r="6"/><circle cx="2490.2" cy="441.3" r="6"/><circle cx="2479.6" cy="444.2" r="6"/><circle cx="2482.9" cy="442.4" r="6"/><circle cx="2491.2" cy="445.3" r="6"/><circle cx="2480.5" cy="449.3" r="6"/><circle cx="2483.2" cy="444.1" r="6"/><circle cx="2479.8" cy="441.2" r="6"/><circle cx="2474.0" cy="447.6" r="6"/><circle cx="2291.6" cy="424.8" r="6"/><circle cx="2251.3" cy="423.3" r="6"/><circle cx="2288.9" cy="427.4" r="6"/><circle cx="2271.6" cy="427.9" r="6"/><circle cx="2270.7" cy="425.2" r="6"/><circle cx="2272.8" cy="424.0" r="6"/><circle cx="2271.4" cy="430.1" r="6"/><circle cx="2279.0" cy="428.2" r="6"/><circle cx="2259.7" cy="429.6" r="6"/><circle cx="2265.6" cy="434.5" r="6"/><circle cx="2464.0" cy="368.7" r="6"/><circle cx="2455.3" cy="365.6" r="6"/><circle cx="2452.0" cy="367.4" r="6"/><circle cx="2460.7" cy="372.0" r="6"/><circle cx="2462.6" cy="380.4" r="6"/><circle cx="2453.7" cy="369.4" r="6"/><circle cx="2478.2" cy="359.5" r="6"/><circle cx="2454.9" cy="370.2" r="6"/><circle cx="2459.7" cy="371.5" r="6"/><circle cx="2456.9" cy="371.2" r="6"/></g><g fill="#22aa22" fill-opacity=".32"><circle cx="2229.0" cy="274.5" r="6"/><circle cx="2239.0" cy="301.7" r="6"/><circle cx="2247.8" cy="299.9" r="6"/><circle cx="2255.7" cy="318.4" r="6"/><circle cx="2254.9" cy="325.4" r="6"/><circle cx="2290.0" cy="440.4" r="6"/><circle cx="2308.4" cy="444.8" r="6"/><circle cx="2333.9" cy="443.1" r="6"/><circle cx="2485.0" cy="368.4" r="6"/><circle cx="2376.1" cy="422.0" r="6"/><circle cx="2393.6" cy="429.0" r="6"/><circle cx="2386.6" cy="425.5" r="6"/><circle cx="2308.1" cy="368.7" r="6"/><circle cx="2289.3" cy="351.2" r="6"/><circle cx="2307.5" cy="349.6" r="6"/><circle cx="2297.5" cy="367.1" r="6"/><circle cx="2301.3" cy="367.2" r="6"/><circle cx="2314.8" cy="363.8" r="6"/><circle cx="2312.5" cy="359.4" r="6"/><circle cx="2293.9" cy="360.2" r="6"/><circle cx="2311.9" cy="354.9" r="6"/><circle cx="2306.6" cy="368.4" r="6"/><circle cx="2299.1" cy="367.3" r="6"/><circle cx="2325.5" cy="354.7" r="6"/><circle cx="2309.0" cy="358.9" r="6"/><circle cx="2322.4" cy="363.9" r="6"/><circle cx="2316.2" cy="353.3" r="6"/><circle cx="2307.4" cy="360.4" r="6"/><circle cx="2290.4" cy="375.7" r="6"/><circle cx="2316.2" cy="342.1" r="6"/><circle cx="2314.7" cy="359.1" r="6"/><circle cx="2311.9" cy="364.4" r="6"/><circle cx="2293.1" cy="358.3" r="6"/><circle cx="2322.0" cy="354.5" r="6"/><circle cx="2297.7" cy="346.2" r="6"/><circle cx="2295.8" cy="364.1" r="6"/><circle cx="2323.9" cy="365.0" r="6"/><circle cx="2309.9" cy="384.1" r="6"/><circle cx="2302.5" cy="353.4" r="6"/><circle cx="2312.7" cy="366.3" r="6"/><circle cx="2315.4" cy="371.6" r="6"/><circle cx="2323.4" cy="381.6" r="6"/><circle cx="2313.6" cy="378.4" r="6"/><circle cx="2318.3" cy="383.1" r="6"/><circle cx="2320.9" cy="379.2" r="6"/><circle cx="2319.4" cy="387.2" r="6"/><circle cx="2330.2" cy="377.3" r="6"/><circle cx="2326.8" cy="374.5" r="6"/><circle cx="2322.0" cy="385.1" r="6"/><circle cx="2330.9" cy="377.2" r="6"/><circle cx="2321.1" cy="381.2" r="6"/><circle cx="2312.4" cy="380.0" r="6"/><circle cx="2317.4" cy="382.5" r="6"/><circle cx="2314.7" cy="366.0" r="6"/><circle cx="2499.2" cy="414.0" r="6"/><circle cx="2496.3" cy="420.1" r="6"/><circle cx="2497.7" cy="405.6" r="6"/><circle cx="2501.4" cy="396.3" r="6"/><circle cx="2495.7" cy="411.3" r="6"/><circle cx="2503.2" cy="409.9" r="6"/><circle cx="2500.5" cy="405.1" r="6"/><circle cx="2500.5" cy="427.5" r="6"/><circle cx="2495.6" cy="434.3" r="6"/><circle cx="2495.8" cy="411.6" r="6"/><circle cx="2499.9" cy="421.4" r="6"/><circle cx="2492.9" cy="391.2" r="6"/><circle cx="2502.0" cy="419.1" r="6"/><circle cx="2502.1" cy="436.9" r="6"/><circle cx="2500.0" cy="413.9" r="6"/><circle cx="2503.6" cy="415.0" r="6"/><circle cx="2507.2" cy="399.5" r="6"/><circle cx="2497.2" cy="378.2" r="6"/><circle cx="2503.0" cy="407.9" r="6"/><circle cx="2503.6" cy="432.3" r="6"/><circle cx="2499.0" cy="409.0" r="6"/><circle cx="2496.6" cy="403.4" r="6"/><circle cx="2495.9" cy="417.6" r="6"/><circle cx="2499.2" cy="412.1" r="6"/><circle cx="2498.2" cy="420.3" r="6"/><circle cx="2501.4" cy="410.1" r="6"/><circle cx="2502.3" cy="410.0" r="6"/><circle cx="2493.3" cy="425.5" r="6"/><circle cx="2501.3" cy="402.2" r="6"/><circle cx="2504.3" cy="414.8" r="6"/><circle cx="2491.3" cy="427.0" r="6"/><circle cx="2500.7" cy="420.1" r="6"/><circle cx="2500.0" cy="410.0" r="6"/><circle cx="2491.4" cy="420.8" r="6"/><circle cx="2266.5" cy="389.6" r="6"/><circle cx="2277.7" cy="397.3" r="6"/><circle cx="2289.1" cy="387.8" r="6"/><circle cx="2264.1" cy="350.6" r="6"/><circle cx="2250.5" cy="409.9" r="6"/><circle cx="2312.4" cy="388.0" r="6"/><circle cx="2261.1" cy="429.0" r="6"/><circle cx="2253.9" cy="411.1" r="6"/><circle cx="2324.4" cy="396.5" r="6"/><circle cx="2308.5" cy="380.7" r="6"/><circle cx="2272.7" cy="394.0" r="6"/><circle cx="2269.4" cy="419.5" r="6"/><circle cx="2349.4" cy="381.6" r="6"/><circle cx="2245.2" cy="406.1" r="6"/><circle cx="2228.3" cy="406.1" r="6"/><circle cx="2285.5" cy="389.8" r="6"/><circle cx="2284.1" cy="363.0" r="6"/><circle cx="2292.1" cy="363.1" r="6"/><circle cx="2240.9" cy="383.9" r="6"/><circle cx="2251.3" cy="413.8" r="6"/><circle cx="2464.3" cy="397.8" r="6"/><circle cx="2476.4" cy="456.9" r="6"/><circle cx="2462.3" cy="420.6" r="6"/><circle cx="2494.8" cy="417.7" r="6"/><circle cx="2428.3" cy="484.1" r="6"/><circle cx="2520.3" cy="350.4" r="6"/><circle cx="2461.1" cy="422.2" r="6"/><circle cx="2487.6" cy="429.7" r="6"/><circle cx="2455.0" cy="378.2" r="6"/><circle cx="2464.8" cy="440.6" r="6"/><circle cx="2433.4" cy="379.0" r="6"/><circle cx="2461.5" cy="351.9" r="6"/><circle cx="2455.3" cy="396.7" r="6"/><circle cx="2474.0" cy="388.8" r="6"/><circle cx="2322.2" cy="390.1" r="6"/><circle cx="2326.6" cy="388.6" r="6"/><circle cx="2326.9" cy="396.1" r="6"/><circle cx="2333.1" cy="401.1" r="6"/><circle cx="2322.7" cy="389.9" r="6"/><circle cx="2313.8" cy="402.1" r="6"/><circle cx="2323.1" cy="392.0" r="6"/><circle cx="2329.6" cy="385.0" r="6"/><circle cx="2476.9" cy="446.5" r="6"/><circle cx="2464.8" cy="447.4" r="6"/><circle cx="2480.7" cy="441.7" r="6"/><circle cx="2478.7" cy="447.1" r="6"/><circle cx="2476.9" cy="447.8" r="6"/><circle cx="2481.3" cy="446.0" r="6"/></g><g fill="#2222f4" fill-opacity=".32"><circle cx="2207.4" cy="341.2" r="6"/><circle cx="2212.7" cy="343.0" r="6"/><circle cx="2235.5" cy="344.7" r="6"/><circle cx="2255.7" cy="295.5" r="6"/><circle cx="2272.4" cy="304.3" r="6"/><circle cx="2274.2" cy="313.1" r="6"/><circle cx="2318.1" cy="350.0" r="6"/><circle cx="2328.6" cy="366.7" r="6"/><circle cx="2226.7" cy="425.5" r="6"/><circle cx="2265.4" cy="429.0" r="6"/><circle cx="2283.0" cy="430.8" r="6"/><circle cx="2305.8" cy="422.0" r="6"/><circle cx="2343.6" cy="379.8" r="6"/><circle cx="2360.2" cy="380.7" r="6"/><circle cx="2362.0" cy="381.6" r="6"/><circle cx="2379.6" cy="376.3" r="6"/><circle cx="2371.7" cy="388.6" r="6"/><circle cx="2384.8" cy="393.0" r="6"/><circle cx="2400.6" cy="379.0" r="6"/><circle cx="2393.6" cy="388.6" r="6"/><circle cx="2420.0" cy="397.4" r="6"/><circle cx="2423.5" cy="406.2" r="6"/><circle cx="2453.3" cy="353.5" r="6"/><circle cx="2467.4" cy="357.0" r="6"/><circle cx="2469.2" cy="358.8" r="6"/><circle cx="2483.2" cy="353.5" r="6"/><circle cx="2511.3" cy="351.7" r="6"/><circle cx="2520.1" cy="364.0" r="6"/><circle cx="2519.2" cy="365.8" r="6"/><circle cx="2521.8" cy="386.0" r="6"/><circle cx="2521.0" cy="399.2" r="6"/><circle cx="2434.0" cy="432.5" r="6"/><circle cx="2358.5" cy="415.0" r="6"/><circle cx="2367.3" cy="413.2" r="6"/><circle cx="2278.9" cy="327.6" r="6"/><circle cx="2278.3" cy="325.5" r="6"/><circle cx="2274.6" cy="338.9" r="6"/><circle cx="2277.0" cy="329.0" r="6"/><circle cx="2270.0" cy="325.6" r="6"/><circle cx="2275.9" cy="334.7" r="6"/><circle cx="2276.9" cy="332.5" r="6"/><circle cx="2274.9" cy="336.9" r="6"/><circle cx="2273.3" cy="326.9" r="6"/><circle cx="2279.0" cy="330.1" r="6"/><circle cx="2273.8" cy="326.7" r="6"/><circle cx="2273.9" cy="333.1" r="6"/><circle cx="2276.6" cy="323.4" r="6"/><circle cx="2276.9" cy="330.7" r="6"/><circle cx="2399.8" cy="398.0" r="6"/><circle cx="2404.2" cy="392.1" r="6"/><circle cx="2410.8" cy="400.9" r="6"/><circle cx="2401.7" cy="396.2" r="6"/><circle cx="2400.5" cy="406.1" r="6"/><circle cx="2402.9" cy="400.2" r="6"/><circle cx="2401.9" cy="398.2" r="6"/><circle cx="2419.6" cy="380.5" r="6"/><circle cx="2403.2" cy="396.5" r="6"/><circle cx="2405.3" cy="390.4" r="6"/><circle cx="2419.1" cy="394.3" r="6"/><circle cx="2395.8" cy="398.4" r="6"/><circle cx="2395.3" cy="400.0" r="6"/><circle cx="2402.4" cy="394.7" r="6"/><circle cx="2311.9" cy="400.1" r="6"/><circle cx="2214.1" cy="358.7" r="6"/><circle cx="2309.0" cy="414.3" r="6"/><circle cx="2235.3" cy="417.0" r="6"/><circle cx="2283.7" cy="412.2" r="6"/><circle cx="2182.1" cy="390.5" r="6"/><circle cx="2298.6" cy="414.2" r="6"/><circle cx="2297.9" cy="341.3" r="6"/><circle cx="2271.6" cy="408.7" r="6"/><circle cx="2359.5" cy="375.6" r="6"/><circle cx="2253.2" cy="398.2" r="6"/><circle cx="2298.1" cy="387.3" r="6"/><circle cx="2307.7" cy="379.4" r="6"/><circle cx="2275.2" cy="385.4" r="6"/><circle cx="2271.2" cy="381.6" r="6"/><circle cx="2206.5" cy="422.4" r="6"/><circle cx="2276.6" cy="384.7" r="6"/><circle cx="2272.8" cy="420.0" r="6"/><circle cx="2229.3" cy="394.9" r="6"/><circle cx="2285.3" cy="409.4" r="6"/><circle cx="2449.8" cy="341.5" r="6"/><circle cx="2491.4" cy="414.2" r="6"/><circle cx="2459.0" cy="396.1" r="6"/><circle cx="2465.6" cy="391.7" r="6"/><circle cx="2431.6" cy="382.3" r="6"/><circle cx="2442.9" cy="386.2" r="6"/><circle cx="2428.1" cy="423.4" r="6"/><circle cx="2424.1" cy="424.1" r="6"/><circle cx="2431.9" cy="415.0" r="6"/><circle cx="2494.8" cy="410.5" r="6"/><circle cx="2439.4" cy="405.9" r="6"/><circle cx="2462.5" cy="352.7" r="6"/><circle cx="2442.6" cy="409.3" r="6"/><circle cx="2446.2" cy="406.8" r="6"/><circle cx="2478.0" cy="427.3" r="6"/><circle cx="2482.5" cy="422.0" r="6"/><circle cx="2422.0" cy="395.5" r="6"/><circle cx="2422.1" cy="393.5" r="6"/><circle cx="2422.5" cy="383.5" r="6"/><circle cx="2421.7" cy="395.5" r="6"/><circle cx="2418.3" cy="395.5" r="6"/><circle cx="2426.2" cy="394.5" r="6"/></g><g fill="#00a0a0" fill-opacity=".9"><ellipse cx="2265.4" cy="399.2" rx="38" ry="24" transform="rotate(6 2265.4 399.2)"/><ellipse cx="2462.1" cy="414.1" rx="26" ry="32" transform="rotate(-9 2462.1 414.1)"/></g><g fill="#00a0a0" fill-opacity=".32"><circle cx="2244.5" cy="252.8" r="6"/><circle cx="2237.3" cy="288.5" r="6"/><circle cx="2242.6" cy="288.5" r="6"/><circle cx="2247.8" cy="299.0" r="6"/><circle cx="2414.7" cy="441.3" r="6"/><circle cx="2439.3" cy="451.9" r="6"/><circle cx="2456.9" cy="448.4" r="6"/><circle cx="2490.2" cy="388.6" r="6"/><circle cx="2342.7" cy="409.7" r="6"/><circle cx="2343.6" cy="422.0" r="6"/><circle cx="2323.4" cy="400.9" r="6"/><circle cx="2328.6" cy="402.7" r="6"/><circle cx="2315.6" cy="366.5" r="6"/><circle cx="2263.4" cy="372.5" r="6"/><circle cx="2283.5" cy="439.4" r="6"/><circle cx="2209.2" cy="395.4" r="6"/><circle cx="2277.4" cy="396.0" r="6"/><circle cx="2281.0" cy="368.3" r="6"/><circle cx="2283.9" cy="406.4" r="6"/><circle cx="2266.7" cy="390.8" r="6"/><circle cx="2280.4" cy="393.6" r="6"/><circle cx="2271.1" cy="392.4" r="6"/><circle cx="2215.2" cy="393.7" r="6"/><circle cx="2268.8" cy="410.4" r="6"/><circle cx="2245.8" cy="396.7" r="6"/><circle cx="2279.0" cy="402.6" r="6"/><circle cx="2290.3" cy="430.5" r="6"/><circle cx="2247.8" cy="369.6" r="6"/><circle cx="2282.4" cy="423.0" r="6"/><circle cx="2284.9" cy="412.9" r="6"/><circle cx="2252.6" cy="387.6" r="6"/><circle cx="2286.6" cy="388.1" r="6"/><circle cx="2226.3" cy="380.8" r="6"/><circle cx="2318.4" cy="432.3" r="6"/><circle cx="2251.1" cy="387.2" r="6"/><circle cx="2271.6" cy="388.9" r="6"/><circle cx="2294.8" cy="401.0" r="6"/><circle cx="2239.2" cy="415.5" r="6"/><circle cx="2252.0" cy="401.0" r="6"/><circle cx="2265.6" cy="394.6" r="6"/><circle cx="2273.7" cy="390.0" r="6"/><circle cx="2227.3" cy="363.4" r="6"/><circle cx="2238.1" cy="385.5" r="6"/><circle cx="2264.8" cy="399.9" r="6"/><circle cx="2277.7" cy="402.1" r="6"/><circle cx="2248.7" cy="387.2" r="6"/><circle cx="2218.2" cy="392.0" r="6"/><circle cx="2275.5" cy="407.8" r="6"/><circle cx="2262.9" cy="396.4" r="6"/><circle cx="2286.3" cy="401.5" r="6"/><circle cx="2281.1" cy="409.2" r="6"/><circle cx="2268.3" cy="418.4" r="6"/><circle cx="2253.1" cy="392.7" r="6"/><circle cx="2248.5" cy="385.9" r="6"/><circle cx="2297.7" cy="427.9" r="6"/><circle cx="2265.1" cy="407.4" r="6"/><circle cx="2290.5" cy="413.4" r="6"/><circle cx="2294.2" cy="383.8" r="6"/><circle cx="2250.4" cy="404.2" r="6"/><circle cx="2297.4" cy="403.9" r="6"/><circle cx="2246.7" cy="392.2" r="6"/><circle cx="2251.8" cy="385.4" r="6"/><circle cx="2299.9" cy="393.6" r="6"/><circle cx="2262.7" cy="430.2" r="6"/><circle cx="2291.4" cy="406.6" r="6"/><circle cx="2251.1" cy="403.7" r="6"/><circle cx="2300.8" cy="411.7" r="6"/><circle cx="2293.5" cy="403.4" r="6"/><circle cx="2277.2" cy="397.4" r="6"/><circle cx="2273.1" cy="418.8" r="6"/><circle cx="2233.5" cy="395.1" r="6"/><circle cx="2271.6" cy="391.5" r="6"/><circle cx="2257.4" cy="409.8" r="6"/><circle cx="2309.3" cy="412.7" r="6"/><circle cx="2274.9" cy="377.7" r="6"/><circle cx="2308.4" cy="404.6" r="6"/><circle cx="2266.2" cy="383.1" r="6"/><circle cx="2265.7" cy="383.3" r="6"/><circle cx="2266.3" cy="406.0" r="6"/><circle cx="2265.7" cy="403.2" r="6"/><circle cx="2244.3" cy="417.7" r="6"/><circle cx="2253.4" cy="371.6" r="6"/><circle cx="2262.3" cy="387.8" r="6"/><circle cx="2243.3" cy="391.8" r="6"/><circle cx="2273.6" cy="382.9" r="6"/><circle cx="2260.3" cy="419.3" r="6"/><circle cx="2280.9" cy="398.5" r="6"/><circle cx="2268.4" cy="397.7" r="6"/><circle cx="2263.3" cy="409.6" r="6"/><circle cx="2266.8" cy="364.5" r="6"/><circle cx="2266.2" cy="386.4" r="6"/><circle cx="2280.8" cy="391.9" r="6"/><circle cx="2265.6" cy="430.7" r="6"/><circle cx="2243.6" cy="380.7" r="6"/><circle cx="2237.3" cy="361.7" r="6"/><circle cx="2222.8" cy="400.2" r="6"/><circle cx="2253.8" cy="371.0" r="6"/><circle cx="2231.3" cy="404.7" r="6"/><circle cx="2248.6" cy="392.2" r="6"/><circle cx="2270.8" cy="419.3" r="6"/><circle cx="2307.3" cy="418.3" r="6"/><circle cx="2268.3" cy="402.1" r="6"/><circle cx="2303.7" cy="423.7" r="6"/><circle cx="2257.8" cy="405.0" r="6"/><circle cx="2271.7" cy="400.6" r="6"/><circle cx="2256.1" cy="379.0" r="6"/><circle cx="2255.7" cy="375.8" r="6"/><circle cx="2292.0" cy="409.6" r="6"/><circle cx="2236.4" cy="416.5" r="6"/><circle cx="2288.1" cy="373.8" r="6"/><circle cx="2305.4" cy="414.9" r="6"/><circle cx="2313.3" cy="386.2" r="6"/><circle cx="2276.7" cy="406.4" r="6"/><circle cx="2269.7" cy="402.1" r="6"/><circle cx="2291.1" cy="380.1" r="6"/><circle cx="2239.6" cy="376.4" r="6"/><circle cx="2253.8" cy="389.2" r="6"/><circle cx="2273.2" cy="403.8" r="6"/><circle cx="2267.1" cy="389.5" r="6"/><circle cx="2254.1" cy="411.8" r="6"/><circle cx="2282.3" cy="402.3" r="6"/><circle cx="2255.9" cy="420.7" r="6"/><circle cx="2251.2" cy="407.1" r="6"/><circle cx="2291.6" cy="398.0" r="6"/><circle cx="2285.5" cy="385.0" r="6"/><circle cx="2287.8" cy="404.3" r="6"/><circle cx="2228.9" cy="405.2" r="6"/><circle cx="2243.6" cy="415.5" r="6"/><circle cx="2250.4" cy="395.3" r="6"/><circle cx="2272.2" cy="395.0" r="6"/><circle cx="2272.0" cy="391.8" r="6"/><circle cx="2280.4" cy="400.8" r="6"/><circle cx="2274.1" cy="360.2" r="6"/><circle cx="2291.3" cy="402.2" r="6"/><circle cx="2225.4" cy="396.5" r="6"/><circle cx="2274.3" cy="415.6" r="6"/><circle cx="2238.9" cy="418.9" r="6"/><circle cx="2258.4" cy="433.1" r="6"/><circle cx="2261.1" cy="408.6" r="6"/><circle cx="2258.8" cy="382.4" r="6"/><circle cx="2288.6" cy="414.6" r="6"/><circle cx="2298.6" cy="414.9" r="6"/><circle cx="2255.0" cy="374.1" r="6"/><circle cx="2251.8" cy="388.0" r="6"/><circle cx="2246.3" cy="405.7" r="6"/><circle cx="2273.1" cy="396.0" r="6"/><circle cx="2269.5" cy="397.5" r="6"/><circle cx="2269.1" cy="410.4" r="6"/><circle cx="2287.8" cy="391.5" r="6"/><circle cx="2229.6" cy="416.2" r="6"/><circle cx="2266.4" cy="415.3" r="6"/><circle cx="2229.1" cy="390.7" r="6"/><circle cx="2268.1" cy="378.6" r="6"/><circle cx="2252.8" cy="408.4" r="6"/><circle cx="2287.2" cy="424.4" r="6"/><circle cx="2248.1" cy="377.1" r="6"/><circle cx="2275.7" cy="413.8" r="6"/><circle cx="2271.6" cy="380.9" r="6"/><circle cx="2281.7" cy="412.3" r="6"/><circle cx="2278.5" cy="393.4" r="6"/><circle cx="2271.1" cy="411.2" r="6"/><circle cx="2255.5" cy="371.5" r="6"/><circle cx="2272.1" cy="406.8" r="6"/><circle cx="2264.4" cy="411.9" r="6"/><circle cx="2252.4" cy="396.7" r="6"/><circle cx="2257.7" cy="406.7" r="6"/><circle cx="2301.5" cy="399.1" r="6"/><circle cx="2309.2" cy="425.7" r="6"/><circle cx="2282.2" cy="409.4" r="6"/><circle cx="2305.3" cy="400.6" r="6"/><circle cx="2264.4" cy="383.7" r="6"/><circle cx="2274.0" cy="419.5" r="6"/><circle cx="2276.7" cy="406.4" r="6"/><circle cx="2260.7" cy="401.1" r="6"/><circle cx="2232.0" cy="411.0" r="6"/><circle cx="2257.8" cy="382.4" r="6"/><circle cx="2249.8" cy="385.7" r="6"/><circle cx="2283.0" cy="416.3" r="6"/><circle cx="2233.7" cy="409.4" r="6"/><circle cx="2286.1" cy="392.9" r="6"/><circle cx="2233.2" cy="385.1" r="6"/><circle cx="2250.7" cy="402.7" r="6"/><circle cx="2260.3" cy="369.3" r="6"/><circle cx="2272.8" cy="377.7" r="6"/><circle cx="2287.4" cy="383.9" r="6"/><circle cx="2251.1" cy="385.4" r="6"/><circle cx="2251.4" cy="416.6" r="6"/><circle cx="2283.6" cy="409.7" r="6"/><circle cx="2274.8" cy="377.7" r="6"/><circle cx="2254.5" cy="390.1" r="6"/><circle cx="2242.8" cy="404.3" r="6"/><circle cx="2249.8" cy="387.3" r="6"/><circle cx="2245.0" cy="367.3" r="6"/><circle cx="2276.8" cy="419.6" r="6"/><circle cx="2270.7" cy="385.6" r="6"/><circle cx="2204.6" cy="395.6" r="6"/><circle cx="2292.2" cy="406.2" r="6"/><circle cx="2284.0" cy="422.4" r="6"/><circle cx="2291.2" cy="395.4" r="6"/><circle cx="2287.8" cy="412.6" r="6"/><circle cx="2231.6" cy="389.9" r="6"/><circle cx="2233.7" cy="394.4" r="6"/><circle cx="2279.9" cy="385.2" r="6"/><circle cx="2217.5" cy="413.2" r="6"/><circle cx="2271.7" cy="421.1" r="6"/><circle cx="2234.3" cy="411.4" r="6"/><circle cx="2308.9" cy="432.6" r="6"/><circle cx="2260.3" cy="402.6" r="6"/><circle cx="2260.5" cy="413.1" r="6"/><circle cx="2288.5" cy="402.7" r="6"/><circle cx="2233.9" cy="406.7" r="6"/><circle cx="2254.0" cy="407.1" r="6"/><circle cx="2268.9" cy="423.0" r="6"/><circle cx="2291.5" cy="395.3" r="6"/><circle cx="2270.7" cy="425.2" r="6"/><circle cx="2252.7" cy="404.2" r="6"/><circle cx="2290.2" cy="419.9" r="6"/><circle cx="2278.9" cy="381.4" r="6"/><circle cx="2236.8" cy="399.9" r="6"/><circle cx="2270.4" cy="436.6" r="6"/><circle cx="2244.5" cy="413.5" r="6"/><circle cx="2285.0" cy="376.9" r="6"/><circle cx="2246.8" cy="399.7" r="6"/><circle cx="2254.6" cy="395.8" r="6"/><circle cx="2277.1" cy="388.6" r="6"/><circle cx="2276.7" cy="391.1" r="6"/><circle cx="2252.4" cy="405.6" r="6"/><circle cx="2252.2" cy="402.0" r="6"/><circle cx="2301.1" cy="403.1" r="6"/><circle cx="2261.1" cy="409.4" r="6"/><circle cx="2255.7" cy="413.9" r="6"/><circle cx="2235.8" cy="405.2" r="6"/><circle cx="2255.1" cy="386.6" r="6"/><circle cx="2306.2" cy="391.0" r="6"/><circle cx="2303.7" cy="412.5" r="6"/><circle cx="2299.3" cy="388.4" r="6"/><circle cx="2290.1" cy="422.7" r="6"/><circle cx="2263.0" cy="397.1" r="6"/><circle cx="2320.1" cy="407.2" r="6"/><circle cx="2256.8" cy="389.2" r="6"/><circle cx="2274.9" cy="404.9" r="6"/><circle cx="2266.9" cy="424.2" r="6"/><circle cx="2257.4" cy="405.2" r="6"/><circle cx="2299.5" cy="388.1" r="6"/><circle cx="2286.0" cy="427.8" r="6"/><circle cx="2236.7" cy="380.4" r="6"/><circle cx="2244.8" cy="370.4" r="6"/><circle cx="2278.2" cy="373.6" r="6"/><circle cx="2274.5" cy="421.1" r="6"/><circle cx="2229.7" cy="391.0" r="6"/><circle cx="2221.4" cy="406.0" r="6"/><circle cx="2249.3" cy="393.7" r="6"/><circle cx="2265.8" cy="407.1" r="6"/><circle cx="2257.6" cy="398.6" r="6"/><circle cx="2253.0" cy="399.6" r="6"/><circle cx="2239.1" cy="397.4" r="6"/><circle cx="2222.9" cy="387.8" r="6"/><circle cx="2308.1" cy="404.6" r="6"/><circle cx="2236.8" cy="400.0" r="6"/><circle cx="2246.0" cy="373.3" r="6"/><circle cx="2247.9" cy="408.1" r="6"/><circle cx="2274.1" cy="398.6" r="6"/><circle cx="2246.2" cy="381.6" r="6"/><circle cx="2295.2" cy="405.7" r="6"/><circle cx="2247.1" cy="366.8" r="6"/><circle cx="2231.2" cy="431.6" r="6"/><circle cx="2239.8" cy="395.5" r="6"/><circle cx="2270.3" cy="397.4" r="6"/><circle cx="2261.1" cy="378.9" r="6"/><circle cx="2239.5" cy="421.0" r="6"/><circle cx="2247.3" cy="409.6" r="6"/><circle cx="2227.9" cy="391.4" r="6"/><circle cx="2269.7" cy="414.6" r="6"/><circle cx="2239.4" cy="405.2" r="6"/><circle cx="2275.1" cy="389.5" r="6"/><circle cx="2277.4" cy="387.4" r="6"/><circle cx="2247.6" cy="397.1" r="6"/><circle cx="2204.8" cy="391.5" r="6"/><circle cx="2245.1" cy="376.0" r="6"/><circle cx="2254.8" cy="409.1" r="6"/><circle cx="2254.5" cy="416.4" r="6"/><circle cx="2241.3" cy="377.8" r="6"/><circle cx="2299.5" cy="408.4" r="6"/><circle cx="2287.7" cy="389.4" r="6"/><circle cx="2283.0" cy="404.7" r="6"/><circle cx="2279.9" cy="401.0" r="6"/><circle cx="2293.3" cy="392.6" r="6"/><circle cx="2246.0" cy="375.8" r="6"/><circle cx="2292.4" cy="391.2" r="6"/><circle cx="2243.4" cy="383.4" r="6"/><circle cx="2257.3" cy="379.9" r="6"/><circle cx="2259.8" cy="389.5" r="6"/><circle cx="2254.4" cy="384.2" r="6"/><circle cx="2266.9" cy="392.6" r="6"/><circle cx="2267.6" cy="403.0" r="6"/><circle cx="2276.2" cy="368.6" r="6"/><circle cx="2254.6" cy="386.6" r="6"/><circle cx="2285.0" cy="378.3" r="6"/><circle cx="2249.8" cy="393.4" r="6"/><circle cx="2256.4" cy="412.6" r="6"/><circle cx="2254.1" cy="412.0" r="6"/><circle cx="2235.2" cy="369.9" r="6"/><circle cx="2292.0" cy="408.1" r="6"/><circle cx="2276.1" cy="402.0" r="6"/><circle cx="2278.0" cy="382.8" r="6"/><circle cx="2287.4" cy="393.7" r="6"/><circle cx="2287.3" cy="402.6" r="6"/><circle cx="2223.1" cy="376.3" r="6"/><circle cx="2290.8" cy="399.7" r="6"/><circle cx="2256.2" cy="401.8" r="6"/><circle cx="2256.7" cy="390.4" r="6"/><circle cx="2267.5" cy="401.5" r="6"/><circle cx="2299.3" cy="403.2" r="6"/><circle cx="2304.9" cy="429.2" r="6"/><circle cx="2302.3" cy="418.2" r="6"/><circle cx="2268.1" cy="401.4" r="6"/><circle cx="2263.3" cy="388.4" r="6"/><circle cx="2264.8" cy="389.8" r="6"/><circle cx="2301.3" cy="410.5" r="6"/><circle cx="2258.2" cy="370.7" r="6"/><circle cx="2264.8" cy="393.1" r="6"/><circle cx="2242.7" cy="380.4" r="6"/><circle cx="2214.2" cy="402.3" r="6"/><circle cx="2260.2" cy="436.0" r="6"/><circle cx="2264.9" cy="397.0" r="6"/><circle cx="2297.5" cy="404.3" r="6"/><circle cx="2269.7" cy="394.2" r="6"/><circle cx="2249.7" cy="419.3" r="6"/><circle cx="2285.3" cy="426.0" r="6"/><circle cx="2257.5" cy="398.8" r="6"/><circle cx="2244.3" cy="411.1" r="6"/><circle cx="2233.4" cy="404.1" r="6"/><circle cx="2287.9" cy="421.9" r="6"/><circle cx="2242.8" cy="412.7" r="6"/><circle cx="2250.5" cy="386.7" r="6"/><circle cx="2234.1" cy="412.8" r="6"/><circle cx="2303.1" cy="394.3" r="6"/><circle cx="2248.9" cy="392.6" r="6"/><circle cx="2320.0" cy="419.2" r="6"/><circle cx="2255.8" cy="372.2" r="6"/><circle cx="2248.6" cy="414.7" r="6"/><circle cx="2307.6" cy="399.5" r="6"/><circle cx="2246.4" cy="387.8" r="6"/><circle cx="2209.3" cy="410.4" r="6"/><circle cx="2232.1" cy="415.5" r="6"/><circle cx="2218.5" cy="370.9" r="6"/><circle cx="2275.1" cy="386.0" r="6"/><circle cx="2287.9" cy="401.6" r="6"/><circle cx="2230.4" cy="407.2" r="6"/><circle cx="2293.2" cy="366.5" r="6"/><circle cx="2317.1" cy="413.6" r="6"/><circle cx="2290.7" cy="367.2" r="6"/><circle cx="2245.3" cy="390.7" r="6"/><circle cx="2299.1" cy="375.5" r="6"/><circle cx="2243.6" cy="359.4" r="6"/><circle cx="2257.8" cy="404.8" r="6"/><circle cx="2217.9" cy="383.4" r="6"/><circle cx="2277.2" cy="429.7" r="6"/><circle cx="2285.1" cy="395.5" r="6"/><circle cx="2233.1" cy="378.6" r="6"/><circle cx="2246.0" cy="399.9" r="6"/><circle cx="2260.9" cy="429.6" r="6"/><circle cx="2275.6" cy="380.3" r="6"/><circle cx="2308.2" cy="421.1" r="6"/><circle cx="2269.6" cy="386.2" r="6"/><circle cx="2213.3" cy="375.0" r="6"/><circle cx="2293.2" cy="387.1" r="6"/><circle cx="2227.0" cy="398.9" r="6"/><circle cx="2271.3" cy="411.0" r="6"/><circle cx="2281.7" cy="426.9" r="6"/><circle cx="2239.4" cy="414.7" r="6"/><circle cx="2235.6" cy="409.0" r="6"/><circle cx="2270.1" cy="404.1" r="6"/><circle cx="2293.3" cy="401.6" r="6"/><circle cx="2295.9" cy="418.4" r="6"/><circle cx="2270.3" cy="389.2" r="6"/><circle cx="2244.6" cy="387.3" r="6"/><circle cx="2259.6" cy="398.1" r="6"/><circle cx="2350.2" cy="419.5" r="6"/><circle cx="2289.2" cy="385.6" r="6"/><circle cx="2245.5" cy="391.3" r="6"/><circle cx="2272.8" cy="380.7" r="6"/><circle cx="2312.9" cy="393.5" r="6"/><circle cx="2300.8" cy="359.4" r="6"/><circle cx="2264.7" cy="404.2" r="6"/><circle cx="2269.8" cy="410.8" r="6"/><circle cx="2273.2" cy="403.0" r="6"/><circle cx="2212.1" cy="380.6" r="6"/><circle cx="2196.7" cy="403.9" r="6"/><circle cx="2274.6" cy="396.5" r="6"/><circle cx="2242.8" cy="386.1" r="6"/><circle cx="2315.4" cy="436.3" r="6"/><circle cx="2261.3" cy="422.6" r="6"/><circle cx="2223.2" cy="359.1" r="6"/><circle cx="2253.1" cy="381.7" r="6"/><circle cx="2248.9" cy="401.0" r="6"/><circle cx="2353.8" cy="395.8" r="6"/><circle cx="2266.3" cy="404.4" r="6"/><circle cx="2262.7" cy="416.2" r="6"/><circle cx="2318.9" cy="381.5" r="6"/><circle cx="2270.5" cy="394.8" r="6"/><circle cx="2278.5" cy="372.1" r="6"/><circle cx="2219.0" cy="351.6" r="6"/><circle cx="2280.2" cy="404.2" r="6"/><circle cx="2271.9" cy="355.9" r="6"/><circle cx="2256.0" cy="384.2" r="6"/><circle cx="2226.3" cy="378.3" r="6"/><circle cx="2284.5" cy="411.2" r="6"/><circle cx="2263.8" cy="408.5" r="6"/><circle cx="2247.9" cy="398.7" r="6"/><circle cx="2265.5" cy="409.5" r="6"/><circle cx="2263.6" cy="396.3" r="6"/><circle cx="2457.0" cy="400.0" r="6"/><circle cx="2500.9" cy="417.7" r="6"/><circle cx="2475.6" cy="458.7" r="6"/><circle cx="2480.3" cy="377.4" r="6"/><circle cx="2475.7" cy="428.3" r="6"/><circle cx="2497.4" cy="435.0" r="6"/><circle cx="2470.7" cy="386.8" r="6"/><circle cx="2447.3" cy="420.6" r="6"/><circle cx="2466.7" cy="390.6" r="6"/><circle cx="2453.5" cy="405.7" r="6"/><circle cx="2463.3" cy="419.6" r="6"/><circle cx="2452.5" cy="388.3" r="6"/><circle cx="2487.3" cy="442.4" r="6"/><circle cx="2462.6" cy="434.1" r="6"/><circle cx="2470.9" cy="425.2" r="6"/><circle cx="2467.1" cy="396.0" r="6"/><circle cx="2474.1" cy="432.1" r="6"/><circle cx="2452.1" cy="455.5" r="6"/><circle cx="2502.5" cy="444.9" r="6"/><circle cx="2497.4" cy="423.0" r="6"/><circle cx="2453.6" cy="401.4" r="6"/><circle cx="2447.8" cy="417.3" r="6"/><circle cx="2462.8" cy="426.7" r="6"/><circle cx="2434.0" cy="465.4" r="6"/><circle cx="2499.9" cy="406.5" r="6"/><circle cx="2474.2" cy="420.9" r="6"/><circle cx="2465.3" cy="407.9" r="6"/><circle cx="2456.6" cy="396.3" r="6"/><circle cx="2464.2" cy="411.9" r="6"/><circle cx="2464.0" cy="394.5" r="6"/><circle cx="2462.1" cy="413.7" r="6"/><circle cx="2468.2" cy="389.5" r="6"/><circle cx="2471.4" cy="431.9" r="6"/><circle cx="2470.3" cy="403.8" r="6"/><circle cx="2452.2" cy="409.3" r="6"/><circle cx="2478.5" cy="442.8" r="6"/><circle cx="2456.6" cy="400.1" r="6"/><circle cx="2468.3" cy="416.1" r="6"/><circle cx="2443.5" cy="400.1" r="6"/><circle cx="2461.6" cy="426.9" r="6"/><circle cx="2437.8" cy="395.1" r="6"/><circle cx="2465.9" cy="386.5" r="6"/><circle cx="2464.2" cy="419.8" r="6"/><circle cx="2456.2" cy="392.3" r="6"/><circle cx="2459.2" cy="406.2" r="6"/><circle cx="2464.4" cy="394.8" r="6"/><circle cx="2474.6" cy="375.7" r="6"/><circle cx="2458.3" cy="413.5" r="6"/><circle cx="2475.7" cy="397.9" r="6"/><circle cx="2468.8" cy="399.8" r="6"/><circle cx="2479.2" cy="446.6" r="6"/><circle cx="2455.8" cy="423.0" r="6"/><circle cx="2448.5" cy="435.2" r="6"/><circle cx="2482.0" cy="410.5" r="6"/><circle cx="2443.2" cy="424.0" r="6"/><circle cx="2484.2" cy="432.2" r="6"/><circle cx="2469.4" cy="373.3" r="6"/><circle cx="2454.1" cy="443.8" r="6"/><circle cx="2443.9" cy="439.2" r="6"/><circle cx="2495.6" cy="423.6" r="6"/><circle cx="2479.3" cy="403.2" r="6"/><circle cx="2440.1" cy="413.9" r="6"/><circle cx="2457.7" cy="412.4" r="6"/><circle cx="2472.7" cy="408.1" r="6"/><circle cx="2465.8" cy="421.1" r="6"/><circle cx="2466.9" cy="450.7" r="6"/><circle cx="2469.0" cy="413.5" r="6"/><circle cx="2455.8" cy="400.6" r="6"/><circle cx="2484.6" cy="412.5" r="6"/><circle cx="2441.1" cy="404.1" r="6"/><circle cx="2457.5" cy="404.1" r="6"/><circle cx="2476.1" cy="386.3" r="6"/><circle cx="2470.1" cy="414.5" r="6"/><circle cx="2441.3" cy="416.9" r="6"/><circle cx="2461.2" cy="423.4" r="6"/><circle cx="2454.5" cy="420.2" r="6"/><circle cx="2429.5" cy="394.9" r="6"/><circle cx="2477.8" cy="432.2" r="6"/><circle cx="2459.2" cy="400.6" r="6"/><circle cx="2473.2" cy="367.2" r="6"/><circle cx="2449.7" cy="428.7" r="6"/><circle cx="2469.2" cy="390.0" r="6"/><circle cx="2433.6" cy="447.5" r="6"/><circle cx="2461.1" cy="394.1" r="6"/><circle cx="2465.0" cy="431.2" r="6"/><circle cx="2420.6" cy="442.3" r="6"/><circle cx="2467.4" cy="368.3" r="6"/><circle cx="2468.9" cy="374.4" r="6"/><circle cx="2481.9" cy="418.1" r="6"/><circle cx="2497.7" cy="394.6" r="6"/><circle cx="2464.6" cy="434.3" r="6"/><circle cx="2448.2" cy="400.1" r="6"/><circle cx="2454.7" cy="412.3" r="6"/><circle cx="2444.3" cy="425.6" r="6"/><circle cx="2470.7" cy="412.9" r="6"/><circle cx="2489.2" cy="401.8" r="6"/><circle cx="2481.8" cy="398.3" r="6"/><circle cx="2468.1" cy="371.3" r="6"/><circle cx="2464.1" cy="408.8" r="6"/><circle cx="2450.9" cy="401.6" r="6"/><circle cx="2453.1" cy="399.0" r="6"/><circle cx="2422.1" cy="406.3" r="6"/><circle cx="2450.3" cy="403.5" r="6"/><circle cx="2442.8" cy="412.8" r="6"/><circle cx="2473.8" cy="405.7" r="6"/><circle cx="2457.1" cy="442.0" r="6"/><circle cx="2480.7" cy="429.2" r="6"/><circle cx="2479.9" cy="403.2" r="6"/><circle cx="2462.5" cy="436.0" r="6"/><circle cx="2451.4" cy="411.8" r="6"/><circle cx="2468.8" cy="419.5" r="6"/><circle cx="2459.6" cy="433.7" r="6"/><circle cx="2460.5" cy="428.2" r="6"/><circle cx="2481.5" cy="423.6" r="6"/><circle cx="2470.1" cy="387.2" r="6"/><circle cx="2437.0" cy="403.6" r="6"/><circle cx="2474.0" cy="442.4" r="6"/><circle cx="2441.4" cy="422.3" r="6"/><circle cx="2444.4" cy="400.1" r="6"/><circle cx="2458.7" cy="427.8" r="6"/><circle cx="2468.5" cy="436.5" r="6"/><circle cx="2447.2" cy="433.6" r="6"/><circle cx="2477.3" cy="411.9" r="6"/><circle cx="2467.6" cy="400.1" r="6"/><circle cx="2441.4" cy="407.4" r="6"/><circle cx="2459.3" cy="473.8" r="6"/><circle cx="2458.1" cy="447.9" r="6"/><circle cx="2465.7" cy="418.7" r="6"/><circle cx="2471.5" cy="395.0" r="6"/><circle cx="2478.0" cy="418.2" r="6"/><circle cx="2437.3" cy="429.1" r="6"/><circle cx="2472.1" cy="420.7" r="6"/><circle cx="2486.9" cy="400.3" r="6"/><circle cx="2472.3" cy="426.9" r="6"/><circle cx="2449.6" cy="439.8" r="6"/><circle cx="2432.5" cy="390.0" r="6"/><circle cx="2466.8" cy="389.2" r="6"/><circle cx="2454.2" cy="379.5" r="6"/><circle cx="2458.9" cy="389.5" r="6"/><circle cx="2462.3" cy="380.6" r="6"/><circle cx="2468.1" cy="406.3" r="6"/><circle cx="2462.1" cy="411.3" r="6"/><circle cx="2459.4" cy="385.5" r="6"/><circle cx="2417.7" cy="420.2" r="6"/><circle cx="2443.9" cy="406.0" r="6"/><circle cx="2462.4" cy="371.1" r="6"/><circle cx="2446.4" cy="402.3" r="6"/><circle cx="2444.3" cy="422.3" r="6"/><circle cx="2456.3" cy="396.4" r="6"/><circle cx="2447.0" cy="431.9" r="6"/><circle cx="2451.8" cy="426.6" r="6"/><circle cx="2463.0" cy="372.9" r="6"/><circle cx="2442.8" cy="415.7" r="6"/><circle cx="2469.5" cy="428.0" r="6"/><circle cx="2478.1" cy="432.0" r="6"/><circle cx="2454.2" cy="409.5" r="6"/><circle cx="2473.1" cy="402.2" r="6"/><circle cx="2474.3" cy="377.6" r="6"/><circle cx="2471.8" cy="407.6" r="6"/><circle cx="2430.8" cy="438.0" r="6"/><circle cx="2466.6" cy="412.5" r="6"/><circle cx="2441.5" cy="406.1" r="6"/><circle cx="2484.4" cy="392.0" r="6"/><circle cx="2399.5" cy="404.2" r="6"/><circle cx="2440.4" cy="413.2" r="6"/><circle cx="2451.7" cy="395.2" r="6"/><circle cx="2450.2" cy="436.5" r="6"/><circle cx="2442.8" cy="456.7" r="6"/><circle cx="2448.6" cy="391.9" r="6"/><circle cx="2476.4" cy="422.4" r="6"/><circle cx="2445.8" cy="430.9" r="6"/><circle cx="2427.1" cy="398.7" r="6"/><circle cx="2479.6" cy="404.7" r="6"/><circle cx="2440.7" cy="426.8" r="6"/><circle cx="2476.8" cy="410.1" r="6"/><circle cx="2429.4" cy="410.4" r="6"/><circle cx="2470.7" cy="427.5" r="6"/><circle cx="2492.0" cy="402.9" r="6"/><circle cx="2452.9" cy="413.3" r="6"/><circle cx="2478.9" cy="390.5" r="6"/><circle cx="2474.9" cy="353.2" r="6"/><circle cx="2472.7" cy="397.0" r="6"/><circle cx="2471.2" cy="425.8" r="6"/><circle cx="2440.9" cy="414.1" r="6"/><circle cx="2467.2" cy="424.3" r="6"/><circle cx="2442.3" cy="394.9" r="6"/><circle cx="2436.4" cy="469.9" r="6"/><circle cx="2457.3" cy="408.8" r="6"/><circle cx="2438.7" cy="435.8" r="6"/><circle cx="2456.6" cy="443.7" r="6"/><circle cx="2475.8" cy="411.1" r="6"/><circle cx="2470.2" cy="388.2" r="6"/><circle cx="2453.9" cy="401.9" r="6"/><circle cx="2439.7" cy="416.5" r="6"/><circle cx="2463.2" cy="442.7" r="6"/><circle cx="2402.1" cy="407.7" r="6"/><circle cx="2444.2" cy="405.7" r="6"/><circle cx="2469.7" cy="420.1" r="6"/><circle cx="2460.3" cy="403.1" r="6"/><circle cx="2470.8" cy="419.0" r="6"/><circle cx="2429.1" cy="412.2" r="6"/><circle cx="2434.2" cy="392.2" r="6"/><circle cx="2463.9" cy="413.7" r="6"/><circle cx="2460.5" cy="394.6" r="6"/><circle cx="2455.0" cy="394.7" r="6"/><circle cx="2469.9" cy="426.0" r="6"/><circle cx="2495.0" cy="434.3" r="6"/><circle cx="2446.1" cy="405.6" r="6"/><circle cx="2446.2" cy="421.6" r="6"/><circle cx="2497.2" cy="422.3" r="6"/><circle cx="2419.9" cy="392.8" r="6"/><circle cx="2440.8" cy="426.8" r="6"/><circle cx="2462.2" cy="419.0" r="6"/><circle cx="2489.0" cy="391.3" r="6"/><circle cx="2452.9" cy="455.3" r="6"/><circle cx="2464.7" cy="396.0" r="6"/><circle cx="2422.0" cy="386.8" r="6"/><circle cx="2419.9" cy="420.6" r="6"/><circle cx="2465.1" cy="433.1" r="6"/><circle cx="2456.7" cy="399.0" r="6"/><circle cx="2454.5" cy="453.7" r="6"/><circle cx="2431.7" cy="421.0" r="6"/><circle cx="2463.6" cy="425.4" r="6"/><circle cx="2455.9" cy="424.1" r="6"/><circle cx="2474.7" cy="407.7" r="6"/><circle cx="2452.9" cy="410.2" r="6"/><circle cx="2444.2" cy="411.1" r="6"/><circle cx="2456.8" cy="418.0" r="6"/><circle cx="2488.0" cy="436.2" r="6"/><circle cx="2455.5" cy="426.4" r="6"/><circle cx="2468.6" cy="427.7" r="6"/><circle cx="2462.4" cy="418.3" r="6"/><circle cx="2450.8" cy="398.0" r="6"/><circle cx="2480.1" cy="437.2" r="6"/><circle cx="2473.9" cy="420.1" r="6"/><circle cx="2464.4" cy="403.0" r="6"/><circle cx="2433.0" cy="431.1" r="6"/><circle cx="2462.9" cy="401.0" r="6"/><circle cx="2448.8" cy="441.5" r="6"/><circle cx="2436.0" cy="453.6" r="6"/><circle cx="2479.5" cy="459.8" r="6"/><circle cx="2449.0" cy="414.3" r="6"/><circle cx="2453.1" cy="417.4" r="6"/><circle cx="2455.4" cy="398.1" r="6"/><circle cx="2477.1" cy="394.0" r="6"/><circle cx="2454.3" cy="425.5" r="6"/><circle cx="2450.8" cy="405.3" r="6"/><circle cx="2466.2" cy="404.4" r="6"/><circle cx="2439.7" cy="414.0" r="6"/><circle cx="2462.8" cy="448.4" r="6"/><circle cx="2445.6" cy="435.6" r="6"/><circle cx="2446.8" cy="407.6" r="6"/><circle cx="2456.5" cy="419.3" r="6"/><circle cx="2481.4" cy="446.5" r="6"/><circle cx="2454.5" cy="441.8" r="6"/><circle cx="2480.7" cy="427.0" r="6"/><circle cx="2451.1" cy="433.3" r="6"/><circle cx="2460.5" cy="420.4" r="6"/><circle cx="2458.7" cy="427.2" r="6"/><circle cx="2483.7" cy="433.2" r="6"/><circle cx="2460.8" cy="433.8" r="6"/><circle cx="2483.1" cy="390.0" r="6"/><circle cx="2482.2" cy="381.7" r="6"/><circle cx="2472.3" cy="423.6" r="6"/><circle cx="2487.3" cy="414.8" r="6"/><circle cx="2450.6" cy="397.8" r="6"/><circle cx="2442.3" cy="431.8" r="6"/><circle cx="2455.0" cy="398.8" r="6"/><circle cx="2467.9" cy="395.8" r="6"/><circle cx="2452.4" cy="404.6" r="6"/><circle cx="2493.9" cy="438.6" r="6"/><circle cx="2453.7" cy="381.1" r="6"/><circle cx="2466.2" cy="413.6" r="6"/><circle cx="2468.9" cy="423.6" r="6"/><circle cx="2458.7" cy="432.7" r="6"/><circle cx="2476.1" cy="415.0" r="6"/><circle cx="2452.8" cy="404.1" r="6"/><circle cx="2469.6" cy="388.6" r="6"/><circle cx="2456.2" cy="397.9" r="6"/><circle cx="2439.4" cy="428.8" r="6"/><circle cx="2460.9" cy="413.7" r="6"/><circle cx="2471.5" cy="380.0" r="6"/><circle cx="2461.0" cy="419.0" r="6"/><circle cx="2472.1" cy="388.5" r="6"/><circle cx="2474.1" cy="415.5" r="6"/><circle cx="2487.9" cy="432.7" r="6"/><circle cx="2477.3" cy="455.5" r="6"/><circle cx="2459.9" cy="404.2" r="6"/><circle cx="2452.5" cy="394.5" r="6"/><circle cx="2454.9" cy="374.4" r="6"/><circle cx="2461.1" cy="421.8" r="6"/><circle cx="2477.0" cy="403.2" r="6"/><circle cx="2482.9" cy="395.9" r="6"/><circle cx="2453.1" cy="374.7" r="6"/><circle cx="2445.8" cy="398.6" r="6"/><circle cx="2487.7" cy="419.7" r="6"/><circle cx="2444.5" cy="426.3" r="6"/><circle cx="2468.5" cy="407.0" r="6"/><circle cx="2460.7" cy="406.7" r="6"/><circle cx="2446.9" cy="378.8" r="6"/><circle cx="2462.5" cy="441.7" r="6"/><circle cx="2491.1" cy="399.7" r="6"/><circle cx="2444.8" cy="406.1" r="6"/><circle cx="2481.3" cy="416.5" r="6"/><circle cx="2449.7" cy="419.9" r="6"/><circle cx="2458.1" cy="422.9" r="6"/><circle cx="2448.9" cy="374.2" r="6"/><circle cx="2464.4" cy="428.4" r="6"/><circle cx="2437.4" cy="409.4" r="6"/><circle cx="2479.0" cy="398.6" r="6"/><circle cx="2452.4" cy="461.3" r="6"/><circle cx="2481.5" cy="433.3" r="6"/><circle cx="2445.2" cy="452.0" r="6"/><circle cx="2424.7" cy="400.4" r="6"/><circle cx="2480.3" cy="441.0" r="6"/><circle cx="2439.8" cy="395.3" r="6"/><circle cx="2460.7" cy="361.7" r="6"/><circle cx="2476.2" cy="422.1" r="6"/><circle cx="2453.1" cy="423.9" r="6"/><circle cx="2478.5" cy="415.7" r="6"/><circle cx="2476.1" cy="445.9" r="6"/><circle cx="2451.5" cy="414.7" r="6"/><circle cx="2452.7" cy="436.3" r="6"/><circle cx="2453.8" cy="422.2" r="6"/><circle cx="2464.3" cy="411.0" r="6"/><circle cx="2497.4" cy="404.0" r="6"/><circle cx="2493.3" cy="427.0" r="6"/><circle cx="2488.8" cy="402.9" r="6"/><circle cx="2482.7" cy="426.3" r="6"/><circle cx="2448.9" cy="417.6" r="6"/><circle cx="2458.4" cy="409.1" r="6"/><circle cx="2487.0" cy="389.3" r="6"/><circle cx="2421.5" cy="370.6" r="6"/><circle cx="2450.1" cy="394.9" r="6"/><circle cx="2462.9" cy="423.5" r="6"/><circle cx="2499.1" cy="413.5" r="6"/><circle cx="2469.2" cy="390.8" r="6"/><circle cx="2476.8" cy="441.7" r="6"/><circle cx="2484.7" cy="359.1" r="6"/><circle cx="2483.9" cy="446.5" r="6"/><circle cx="2475.0" cy="371.4" r="6"/><circle cx="2456.2" cy="424.7" r="6"/><circle cx="2468.0" cy="389.0" r="6"/><circle cx="2444.9" cy="435.2" r="6"/><circle cx="2436.7" cy="447.5" r="6"/><circle cx="2462.4" cy="417.0" r="6"/><circle cx="2431.7" cy="398.0" r="6"/><circle cx="2472.1" cy="372.4" r="6"/><circle cx="2501.4" cy="371.1" r="6"/><circle cx="2435.7" cy="413.3" r="6"/><circle cx="2473.2" cy="426.6" r="6"/><circle cx="2452.9" cy="405.4" r="6"/><circle cx="2454.9" cy="396.2" r="6"/><circle cx="2409.4" cy="438.6" r="6"/><circle cx="2466.9" cy="413.0" r="6"/><circle cx="2448.7" cy="417.1" r="6"/><circle cx="2460.8" cy="407.9" r="6"/><circle cx="2480.2" cy="365.4" r="6"/><circle cx="2463.9" cy="383.2" r="6"/><circle cx="2458.2" cy="446.9" r="6"/><circle cx="2263.1" cy="331.3" r="6"/><circle cx="2261.6" cy="324.1" r="6"/><circle cx="2272.4" cy="335.6" r="6"/><circle cx="2261.9" cy="328.2" r="6"/><circle cx="2263.5" cy="328.5" r="6"/><circle cx="2271.6" cy="328.2" r="6"/><circle cx="2278.5" cy="331.7" r="6"/><circle cx="2267.5" cy="329.8" r="6"/><circle cx="2387.2" cy="420.6" r="6"/><circle cx="2392.1" cy="420.7" r="6"/><circle cx="2387.9" cy="428.9" r="6"/><circle cx="2406.9" cy="426.8" r="6"/><circle cx="2388.9" cy="424.7" r="6"/><circle cx="2384.7" cy="429.5" r="6"/><circle cx="2368.8" cy="419.6" r="6"/><circle cx="2378.4" cy="423.5" r="6"/><circle cx="2400.4" cy="425.2" r="6"/><circle cx="2401.6" cy="428.6" r="6"/><circle cx="2383.0" cy="429.5" r="6"/><circle cx="2385.5" cy="430.5" r="6"/><circle cx="2351.4" cy="417.2" r="6"/><circle cx="2355.7" cy="418.9" r="6"/><circle cx="2383.0" cy="415.5" r="6"/><circle cx="2393.5" cy="421.2" r="6"/><circle cx="2408.4" cy="424.4" r="6"/><circle cx="2397.0" cy="427.8" r="6"/><circle cx="2450.2" cy="356.2" r="6"/><circle cx="2440.0" cy="354.5" r="6"/><circle cx="2439.8" cy="356.1" r="6"/><circle cx="2440.0" cy="366.4" r="6"/><circle cx="2451.0" cy="359.8" r="6"/><circle cx="2441.0" cy="365.3" r="6"/><circle cx="2436.8" cy="350.7" r="6"/><circle cx="2448.7" cy="351.7" r="6"/><circle cx="2447.1" cy="351.4" r="6"/><circle cx="2454.7" cy="350.8" r="6"/><circle cx="2446.4" cy="370.1" r="6"/><circle cx="2431.2" cy="370.0" r="6"/><circle cx="2432.3" cy="345.4" r="6"/><circle cx="2445.4" cy="364.1" r="6"/><circle cx="2437.6" cy="339.6" r="6"/><circle cx="2438.8" cy="356.4" r="6"/><circle cx="2315.5" cy="372.1" r="6"/><circle cx="2306.0" cy="369.8" r="6"/><circle cx="2330.2" cy="387.6" r="6"/><circle cx="2315.7" cy="368.6" r="6"/><circle cx="2320.8" cy="383.5" r="6"/><circle cx="2323.0" cy="364.7" r="6"/><circle cx="2319.2" cy="375.8" r="6"/><circle cx="2327.8" cy="384.7" r="6"/><circle cx="2321.6" cy="384.8" r="6"/><circle cx="2315.4" cy="387.5" r="6"/><circle cx="2393.5" cy="407.1" r="6"/><circle cx="2404.9" cy="398.3" r="6"/><circle cx="2391.2" cy="392.6" r="6"/><circle cx="2398.5" cy="404.1" r="6"/><circle cx="2394.4" cy="407.8" r="6"/><circle cx="2379.3" cy="404.3" r="6"/><circle cx="2397.9" cy="402.6" r="6"/><circle cx="2403.8" cy="416.3" r="6"/></g><path d="M2330.3,31.5H2356.3V76H2369.5L2343.3,108.5L2317,76H2330.3Z" fill="#fb6b6b" fill-opacity=".95"/><text x="2343.3" y="48" font-size="40" fill="#222" text-anchor="middle" textLength="189" lengthAdjust="spacingAndGlyphs">Wind: 177</text><text x="2077.5" y="530.5" font-size="20.3" fill="#222">SWD: 177</text></svg></div>
<div id="cht" class="abs"><svg width="2303" height="402" viewBox="0 1139.5 2303 402"><text x="1082" y="1381.5" font-size="115" fill="#9c9c9c" textLength="134" lengthAdjust="spacingAndGlyphs">dtl</text><path d="M43.5,1139.5V1545" stroke="#00a0a0" stroke-width="5" stroke-dasharray="12.2 6.6"/><path d="M79.8,1139.5V1545" stroke="#2222f4" stroke-width="3.8" stroke-dasharray="12.2 6.6"/><path d="M272.4,1139.5V1545" stroke="#c6c000" stroke-width="4.8" stroke-dasharray="12.2 6.6"/><path d="M337,1139.5V1545" stroke="#fb2222" stroke-width="4.5" stroke-dasharray="12.2 6.6"/><path d="M397,1139.5V1545" stroke="#22aa22" stroke-width="4.5" stroke-dasharray="12.2 6.6"/><path d="M412,1139.5V1545" stroke="#c6c000" stroke-width="4.8" stroke-dasharray="12.2 6.6"/><path d="M477.2,1139.5V1545" stroke="#fb2222" stroke-width="4.5" stroke-dasharray="12.2 6.6"/><path d="M530.8,1139.5V1545" stroke="#22aa22" stroke-width="4.5" stroke-dasharray="12.2 6.6"/><path d="M1772.1,1139.5V1545" stroke="#00a0a0" stroke-width="5" stroke-dasharray="12.2 6.6"/><path d="M1843.7,1139.5V1545" stroke="#2222f4" stroke-width="3.8" stroke-dasharray="12.2 6.6"/><path d="M2229.2,1139.5V1545" stroke="#c6c000" stroke-width="4.8" stroke-dasharray="12.2 6.6"/><path d="M2269.7,1139.5V1545" stroke="#fb2222" stroke-width="4.5" stroke-dasharray="12.2 6.6"/><path d="M507.8,1139V1545" stroke="#c6c000" stroke-width="4.4"/><path d="M654.1,1139V1545" stroke="#fb2222" stroke-width="4.4"/><path d="M778.5,1139V1545" stroke="#00a0a0" stroke-width="4.4"/><path d="M783,1139V1545" stroke="#2222f4" stroke-width="4.4"/><path d="M1369.6,1139V1545" stroke="#c6c000" stroke-width="4.4"/><path d="M1412.2,1139V1545" stroke="#2222f4" stroke-width="1.6"/><path d="M1414.8,1139V1545" stroke="#00a0a0" stroke-width="4.4"/><path d="M1432.5,1139V1545" stroke="#22aa22" stroke-width="4.4"/><path d="M1480.4,1139V1545" stroke="#fb2222" stroke-width="4.4"/><path d="M1617.2,1139V1545" stroke="#00a0a0" stroke-width="4.4"/><path d="M1721,1139V1545" stroke="#00a0a0" stroke-width="4.4"/><path d="M1778.5,1139V1545" stroke="#2222f4" stroke-width="4.4"/><path d="M2091.8,1139V1545" stroke="#2222f4" stroke-width="4.4"/><path d="M2097.9,1139V1545" stroke="#00a0a0" stroke-width="4.4"/><path d="M2149,1139V1545" stroke="#22aa22" stroke-width="4.4"/><path d="M2290.5,1139V1545" stroke="#2222f4" stroke-width="4.4"/><text x="511" y="1171" font-size="32" fill="#c6c000">11</text><text x="656" y="1171" font-size="32" fill="#fb2222">6</text><text x="779" y="1171" font-size="32" fill="#00a0a0">9</text><text x="782" y="1171" font-size="32" fill="#2222f4">5</text><text x="1370" y="1171" font-size="32" fill="#c6c000">9</text><text x="1412" y="1171" font-size="32" fill="#2222f4">5</text><text x="1414" y="1171" font-size="32" fill="#00a0a0">6</text><text x="1432" y="1171" font-size="32" fill="#22aa22">3</text><text x="1481" y="1171" font-size="32" fill="#fb2222">-</text><text x="1619" y="1171" font-size="32" fill="#00a0a0">2</text><text x="1722" y="1171" font-size="32" fill="#00a0a0">8</text><text x="1782" y="1171" font-size="32" fill="#2222f4">18</text><text x="2095" y="1171" font-size="32" fill="#2222f4">5</text><text x="2099" y="1171" font-size="32" fill="#00a0a0">6</text><text x="2150" y="1171" font-size="32" fill="#22aa22">-</text><text x="2291" y="1171" font-size="32" fill="#2222f4">4</text><path d="M-5,1188.7H2310M-5,1238.8H2310M-5,1289.0H2310M-5,1339.2H2310M-5,1389.3H2310M-5,1439.5H2310M-5,1489.7H2310M183.0,1130V1545M369.0,1130V1545M555.0,1130V1545M741.1,1130V1545M927.1,1130V1545M1113.1,1130V1545M1299.1,1130V1545M1485.1,1130V1545M1671.2,1130V1545M1857.2,1130V1545M2043.2,1130V1545M2229.2,1130V1545" stroke="#808080" stroke-opacity=".52" stroke-width="3.9" fill="none"/><path d="M43.5,1140.3H1772" stroke="#00a0a0" stroke-width="2.5"/><polyline points="530.8,1467.8 539.1,1468.7 547.4,1469.0 555.7,1469.9 562.8,1470.5 569.8,1470.5 576.8,1471.1 583.8,1472.7 590.9,1472.6 598.9,1473.4 606.8,1475.1 614.8,1475.3 622.8,1476.5 631.3,1476.6 639.8,1477.3 648.4,1477.3 656.0,1477.4 663.7,1477.1 671.4,1476.2 679.0,1476.0 686.7,1475.4 694.7,1474.8 702.7,1475.8 710.6,1475.7 718.6,1475.6 726.6,1475.4 734.6,1476.6 742.3,1476.3 749.9,1476.8 757.6,1477.1 765.3,1477.1 772.9,1477.6 781.9,1476.0 789.9,1475.9 797.9,1474.9 805.9,1475.0 813.9,1474.3 821.9,1474.8 829.8,1476.3 837.8,1477.9 845.8,1480.2 853.8,1481.0 861.8,1482.7 869.2,1483.2 876.7,1484.3 884.1,1485.0 891.6,1485.9 899.0,1487.0 906.5,1487.9 914.0,1489.2 921.4,1489.8 928.9,1491.0 936.0,1490.7 943.2,1490.6 950.4,1490.0 957.6,1489.1 965.6,1490.5 973.6,1491.2 981.6,1491.6 989.5,1491.7 997.5,1492.4 1005.5,1492.4 1013.5,1494.3 1021.5,1495.3 1029.5,1496.1 1037.4,1497.1 1045.4,1499.3 1053.4,1500.7 1061.4,1499.6 1069.4,1500.4 1077.4,1500.0 1085.4,1499.7 1093.3,1499.8 1101.3,1500.4 1108.4,1501.2 1115.5,1500.9 1122.6,1502.3 1129.7,1502.4 1136.8,1503.9 1143.9,1504.1 1151.0,1505.5 1158.1,1506.3 1165.2,1506.5 1172.4,1507.9 1179.6,1507.8 1186.8,1508.3 1193.9,1509.8 1201.1,1509.9 1208.3,1510.9 1215.5,1511.9 1222.7,1513.0 1230.0,1512.2 1237.3,1511.8 1244.6,1512.6 1251.9,1511.7 1259.2,1512.3 1266.5,1512.0 1273.8,1511.1 1281.1,1511.5 1288.4,1511.9 1295.7,1512.4 1303.0,1512.6 1310.3,1512.9 1317.6,1513.3 1324.9,1514.0 1332.9,1514.2 1340.9,1514.8 1348.9,1515.8 1356.8,1515.9 1364.8,1516.7 1372.8,1518.2 1380.3,1518.0 1387.7,1518.4 1395.2,1518.2 1402.6,1519.0 1410.1,1519.6 1417.5,1519.3 1425.5,1518.1 1433.5,1516.2 1443.1,1515.2 1452.7,1515.6 1459.7,1514.8 1466.8,1514.5 1473.9,1513.5 1481.0,1513.4 1488.1,1512.8 1495.2,1511.4 1502.3,1510.9 1509.4,1511.1 1516.5,1510.8 1524.2,1509.4 1531.9,1509.0 1539.9,1508.0 1547.9,1506.6 1555.9,1505.5 1563.9,1504.3 1571.9,1503.3 1579.8,1502.4 1588.2,1502.6 1596.5,1503.2 1604.8,1504.2 1613.1,1503.8 1621.4,1504.9 1629.0,1504.2 1636.7,1502.7 1644.4,1501.7 1652.0,1501.4 1659.7,1499.8 1667.1,1498.5 1674.6,1497.5 1682.1,1496.6 1689.5,1494.7 1697.0,1493.7 1704.4,1492.5 1712.9,1492.4 1721.4,1491.2 1730.0,1490.9 1737.9,1487.7 1745.9,1485.5 1753.9,1483.5 1761.9,1481.4 1774.7,1469.7 1787.4,1464.0 1795.4,1461.2 1803.4,1459.1 1811.4,1456.0 1819.4,1454.1 1827.9,1451.5 1836.4,1448.1 1844.9,1445.5 1852.9,1443.3 1860.9,1440.4 1868.9,1437.8 1876.9,1434.4 1884.5,1432.6 1892.2,1431.2 1899.9,1430.2 1907.5,1427.9 1915.2,1426.4 1923.2,1424.8 1931.2,1423.0 1939.2,1421.2 1947.1,1420.1 1955.1,1418.1 1963.1,1416.9 1971.1,1417.0 1979.1,1415.9 1986.2,1415.4 1993.3,1414.1 2000.4,1414.2 2007.5,1413.5 2014.6,1412.1 2021.7,1412.1 2028.8,1411.6 2035.9,1410.8 2043.0,1410.0 2050.9,1408.6 2058.9,1407.4 2066.9,1406.1 2074.9,1404.7 2082.9,1404.4 2090.9,1403.2 2098.9,1402.9 2106.8,1401.2 2114.8,1400.6 2122.8,1398.7 2130.8,1397.4 2138.8,1395.8 2146.8,1395.5 2154.7,1394.8 2162.7,1394.9 2170.7,1396.6 2178.7,1396.7 2186.7,1397.6 2195.0,1400.5 2203.3,1402.8 2211.6,1405.0 2219.9,1408.1 2228.2,1410.1 2235.9,1411.5 2243.5,1413.2 2251.2,1415.6 2258.9,1416.9 2266.5,1419.0 2276.1,1421.6 2285.7,1424.7 2298.5,1431.4" fill="none" stroke="#22aa22" stroke-width="5.8" stroke-linejoin="round"/><polyline points="477.2,1428.8 484.2,1428.7 491.2,1429.0 498.2,1428.8 506.8,1428.0 515.3,1427.8 523.8,1427.8 531.8,1428.4 539.8,1429.2 547.7,1429.3 555.7,1430.5 562.8,1431.2 569.8,1432.1 576.8,1433.0 583.8,1434.2 590.9,1436.1 598.9,1436.7 606.8,1437.4 614.8,1438.1 622.8,1438.1 630.8,1438.0 638.8,1438.3 646.8,1438.2 654.7,1438.2 663.0,1439.5 671.4,1439.8 679.7,1441.7 688.0,1443.1 696.3,1444.2 703.9,1443.2 711.6,1442.9 719.3,1441.8 726.9,1442.1 734.6,1441.4 742.3,1440.4 749.9,1439.5 757.6,1439.6 765.3,1438.5 772.9,1438.2 781.9,1437.2 789.6,1435.1 797.3,1433.3 804.9,1431.8 812.6,1429.9 820.3,1427.8 827.5,1428.2 834.6,1429.0 841.8,1428.3 849.0,1428.5 856.2,1429.4 863.4,1429.1 870.6,1429.6 877.8,1429.8 884.9,1429.3 891.9,1429.7 899.0,1428.4 906.1,1428.3 913.2,1427.7 920.3,1427.8 927.4,1427.1 934.5,1426.8 941.6,1426.9 948.7,1426.3 955.8,1426.5 962.9,1426.9 970.0,1425.8 977.1,1425.7 984.2,1425.9 991.3,1426.4 998.4,1426.2 1005.5,1425.7 1012.6,1426.4 1019.7,1426.8 1026.8,1427.7 1033.9,1427.8 1041.0,1429.2 1048.1,1430.1 1055.2,1430.7 1062.3,1431.1 1069.4,1432.0 1076.5,1430.8 1083.6,1431.1 1090.7,1432.0 1097.8,1431.7 1104.9,1431.3 1112.0,1431.9 1119.1,1431.5 1126.2,1431.8 1133.3,1431.2 1140.6,1431.4 1148.0,1432.0 1155.4,1431.9 1162.7,1432.5 1170.1,1433.6 1177.5,1433.1 1184.9,1433.0 1192.2,1433.4 1199.6,1433.9 1207.0,1434.9 1214.3,1434.8 1221.7,1435.0 1229.1,1435.1 1236.5,1436.4 1244.0,1436.0 1251.4,1436.0 1258.9,1436.1 1266.3,1436.4 1273.8,1436.8 1281.2,1437.6 1288.7,1437.3 1296.2,1437.4 1303.6,1438.2 1311.1,1438.2 1318.5,1439.3 1326.3,1438.0 1334.0,1438.2 1341.8,1438.3 1349.5,1437.5 1357.3,1438.0 1365.0,1437.1 1372.8,1436.5 1380.8,1436.9 1388.8,1436.6 1396.8,1437.2 1404.7,1437.2 1412.7,1438.1 1420.7,1438.2 1428.3,1436.5 1435.9,1434.6 1443.5,1433.5 1451.1,1432.2 1458.6,1430.9 1466.2,1429.6 1473.8,1429.0 1481.4,1426.8 1488.4,1426.7 1495.4,1427.8 1502.5,1427.3 1509.5,1427.8 1516.5,1427.1 1524.2,1428.8 1531.9,1429.5 1539.6,1430.7 1547.2,1431.7 1554.9,1432.5 1562.6,1433.1 1570.3,1434.2 1577.6,1435.5 1584.9,1436.0 1592.2,1436.5 1599.5,1436.2 1606.8,1437.1 1614.1,1437.7 1621.4,1438.0 1629.1,1438.1 1636.9,1437.6 1644.6,1437.7 1652.4,1437.6 1660.1,1437.1 1667.9,1437.7 1675.7,1437.7 1683.6,1436.4 1691.6,1437.2 1699.6,1437.0 1707.6,1436.4 1715.1,1436.4 1722.5,1438.2 1730.0,1438.0 1738.5,1437.7 1747.0,1436.1 1755.5,1434.1 1763.5,1429.4 1771.5,1425.2 1779.5,1421.9 1787.4,1418.9 1795.4,1417.0 1803.4,1414.0 1811.4,1411.6 1819.4,1410.5 1827.4,1407.0 1835.4,1405.7 1843.3,1402.4 1851.3,1400.8 1859.3,1399.3 1867.3,1397.9 1875.3,1396.0 1883.3,1394.9 1891.2,1392.6 1899.2,1391.7 1907.2,1389.4 1915.2,1388.2 1923.2,1386.2 1931.2,1384.0 1939.2,1382.2 1947.1,1379.7 1955.1,1378.7 1963.1,1378.3 1971.1,1377.1 1979.1,1376.5 1987.1,1375.1 1995.0,1373.5 2003.0,1372.8 2011.0,1372.4 2019.0,1371.2 2027.0,1369.7 2035.0,1369.8 2043.0,1368.9 2050.9,1367.6 2058.9,1367.7 2066.9,1367.1 2074.9,1367.1 2082.9,1366.1 2090.9,1365.6 2098.9,1365.3 2106.8,1365.2 2114.8,1363.5 2122.8,1362.9 2130.8,1364.0 2138.8,1364.8 2146.8,1366.7 2154.7,1369.0 2162.7,1371.9 2170.7,1374.2 2178.7,1376.6 2186.7,1380.8 2195.0,1382.7 2203.3,1385.6 2211.6,1388.9 2219.9,1391.2 2228.2,1394.4 2235.7,1397.0 2243.1,1401.3 2250.6,1403.9 2260.1,1407.8 2269.7,1412.2" fill="none" stroke="#fb2222" stroke-width="5.8" stroke-linejoin="round"/><polyline points="412.0,1383.6 419.0,1383.3 426.1,1383.0 433.1,1382.7 440.1,1382.0 447.1,1381.8 455.1,1380.7 463.1,1381.2 471.1,1381.8 479.1,1381.4 486.3,1380.3 493.5,1377.9 500.6,1376.9 507.8,1375.2 515.8,1375.9 523.8,1376.2 532.3,1378.0 540.8,1380.7 549.3,1383.2 557.9,1384.7 566.4,1385.3 574.9,1385.3 582.9,1385.9 590.9,1385.0 598.9,1385.4 606.8,1384.6 614.8,1383.7 622.8,1383.9 630.8,1382.3 638.8,1381.6 647.3,1382.3 655.8,1381.9 664.3,1381.0 672.0,1382.5 679.7,1382.6 687.3,1383.4 695.0,1383.5 702.7,1385.0 710.6,1385.0 718.6,1385.7 726.6,1385.9 734.6,1385.5 741.8,1385.7 749.0,1385.6 756.3,1385.7 763.5,1385.8 770.7,1386.2 777.9,1386.7 785.1,1386.1 792.3,1385.3 799.5,1383.3 806.7,1381.7 813.9,1380.7 821.9,1380.3 829.8,1380.1 837.8,1380.3 845.8,1380.5 852.9,1380.4 860.0,1382.1 867.1,1381.5 874.2,1383.0 881.3,1383.7 888.4,1383.3 895.5,1384.9 902.6,1385.0 909.7,1385.8 916.8,1384.8 923.9,1384.5 931.0,1384.3 938.1,1384.9 945.2,1383.6 952.3,1383.9 959.4,1383.8 966.5,1383.4 973.6,1382.3 980.7,1382.5 987.8,1382.8 994.9,1383.2 1002.0,1382.5 1009.1,1383.4 1016.2,1383.5 1023.3,1383.7 1030.4,1382.8 1037.4,1384.0 1044.5,1383.1 1051.6,1383.5 1058.7,1383.9 1065.8,1384.4 1072.9,1383.8 1080.0,1384.6 1087.1,1384.3 1094.2,1384.1 1101.3,1384.2 1108.4,1384.7 1115.5,1385.2 1122.6,1385.8 1129.7,1387.1 1136.8,1388.1 1143.9,1387.7 1151.0,1388.1 1158.1,1389.9 1165.2,1389.9 1172.3,1389.9 1179.4,1389.8 1186.5,1390.3 1193.6,1390.7 1200.7,1390.4 1207.8,1390.4 1214.9,1390.1 1222.0,1391.2 1229.1,1390.3 1236.5,1390.1 1244.0,1389.9 1251.4,1388.3 1258.9,1388.3 1266.3,1387.9 1273.8,1386.8 1281.3,1387.4 1288.9,1387.0 1296.4,1387.7 1304.0,1387.8 1311.5,1389.0 1319.1,1388.7 1326.6,1389.3 1334.2,1390.3 1341.7,1390.5 1349.3,1391.0 1356.8,1390.8 1364.8,1392.6 1372.8,1394.6 1380.8,1396.1 1388.8,1397.6 1396.0,1398.9 1403.1,1399.8 1410.3,1401.3 1417.5,1403.2 1424.5,1402.3 1431.6,1400.9 1438.6,1399.8 1445.6,1398.6 1452.7,1397.4 1460.6,1396.8 1468.6,1396.6 1476.6,1395.9 1484.6,1394.5 1491.6,1395.0 1498.7,1394.9 1505.7,1394.8 1512.7,1394.7 1519.7,1394.8 1526.8,1394.3 1533.8,1394.7 1540.8,1394.1 1547.9,1394.4 1554.9,1394.7 1561.9,1394.5 1569.0,1394.0 1576.0,1394.8 1583.0,1394.4 1590.1,1394.3 1597.1,1393.5 1604.1,1394.2 1611.1,1393.8 1618.2,1394.2 1626.5,1393.7 1634.8,1393.8 1643.1,1393.3 1651.4,1393.1 1659.7,1392.3 1667.1,1393.0 1674.6,1393.5 1682.1,1393.9 1689.5,1393.7 1697.0,1394.7 1704.4,1395.1 1712.9,1396.2 1721.4,1397.8 1730.0,1399.1 1738.5,1397.2 1747.0,1396.0 1755.5,1394.3 1763.5,1390.3 1771.5,1385.6 1779.5,1382.2 1787.4,1379.6 1795.4,1377.4 1803.4,1375.3 1811.4,1372.5 1819.4,1371.1 1827.9,1369.0 1836.4,1367.3 1844.9,1365.2 1852.4,1363.0 1859.8,1360.7 1867.3,1358.1 1875.8,1357.1 1884.3,1355.2 1892.8,1354.3 1900.0,1355.1 1907.2,1355.7 1914.4,1355.6 1921.6,1356.6 1928.6,1357.7 1935.6,1358.1 1942.7,1359.8 1949.7,1360.6 1956.7,1361.6 1964.4,1361.7 1972.1,1361.9 1979.7,1361.7 1987.4,1361.7 1995.0,1361.5 2003.0,1361.4 2011.0,1360.6 2019.0,1360.2 2027.0,1359.4 2035.0,1358.3 2043.0,1358.4 2051.3,1356.6 2059.6,1356.3 2067.9,1355.4 2076.2,1354.8 2084.5,1353.6 2091.9,1355.5 2099.4,1355.9 2106.8,1356.4 2114.8,1357.6 2122.8,1357.5 2130.8,1358.5 2138.8,1358.7 2146.8,1360.8 2154.7,1363.0 2162.7,1364.6 2170.7,1365.8 2178.7,1368.9 2186.7,1371.2 2194.7,1373.4 2202.7,1375.7 2212.6,1379.5 2222.5,1382.5" fill="none" stroke="#c6c000" stroke-width="5.8" stroke-linejoin="round"/><polyline points="79.5,1173.1 88.2,1174.5 96.8,1175.4 105.4,1176.6 113.2,1176.3 120.9,1177.0 128.7,1176.8 136.4,1177.2 144.2,1176.7 151.9,1177.2 159.7,1176.6 166.8,1176.8 173.9,1176.2 181.0,1175.4 188.1,1175.1 195.2,1174.8 202.3,1173.7 209.4,1173.7 216.5,1173.5 223.6,1172.4 231.6,1172.4 239.5,1171.5 247.5,1171.0 255.5,1169.7 263.5,1168.8 271.5,1168.9 279.5,1168.5 287.4,1167.7 295.4,1166.9 303.4,1166.7 311.4,1166.8 319.4,1166.1 327.0,1166.3 334.6,1165.2 342.1,1164.2 349.7,1164.1 357.3,1163.1 364.9,1163.2 372.5,1162.6 380.1,1161.5 387.5,1162.8 395.0,1163.9 402.4,1165.1 409.9,1164.8 417.3,1163.1 424.8,1163.0 432.2,1162.7 439.7,1161.8 447.1,1161.6 455.1,1161.7 463.1,1163.3 471.1,1163.5 479.1,1163.6 486.7,1164.0 494.4,1163.2 502.1,1162.8 509.7,1162.8 517.4,1162.0 525.1,1161.8 532.7,1162.3 540.4,1161.8 548.1,1160.6 555.7,1161.2 563.0,1160.9 570.3,1162.0 577.6,1163.3 584.9,1163.6 592.2,1163.8 599.5,1164.6 606.8,1165.2 614.8,1165.1 622.8,1166.3 630.8,1165.3 638.8,1165.9 646.8,1166.4 654.7,1166.2 663.0,1167.3 671.4,1166.9 679.7,1168.2 688.0,1168.6 696.3,1168.8 704.2,1168.1 712.2,1166.6 720.2,1166.1 728.2,1165.1 735.9,1165.1 743.5,1165.3 751.2,1165.9 758.9,1165.9 766.5,1165.8 775.6,1165.0 782.6,1164.0 789.7,1163.8 796.8,1163.8 803.9,1162.6 811.0,1162.0 818.1,1161.7 825.2,1161.8 832.3,1161.1 839.4,1160.6 846.5,1161.0 853.5,1161.8 860.5,1161.3 867.5,1161.7 874.6,1162.5 881.6,1162.4 888.6,1162.2 895.6,1162.6 902.7,1162.9 909.7,1162.7 916.7,1162.6 923.7,1162.1 930.8,1162.2 937.8,1161.2 944.8,1161.2 951.9,1161.2 958.9,1160.7 965.9,1159.6 972.9,1159.5 980.0,1158.7 988.3,1158.7 996.6,1158.7 1004.9,1158.9 1013.2,1159.0 1021.5,1158.1 1029.5,1158.2 1037.4,1159.1 1045.4,1159.1 1053.4,1159.5 1061.4,1160.8 1069.4,1160.4 1076.6,1161.1 1083.9,1160.7 1091.2,1161.4 1098.4,1161.3 1105.7,1160.4 1112.9,1160.5 1120.2,1161.4 1127.5,1161.0 1134.7,1160.8 1142.0,1161.2 1149.2,1161.3 1157.5,1162.0 1165.8,1163.0 1174.1,1163.7 1182.4,1165.1 1190.8,1165.9 1197.9,1166.4 1205.1,1166.3 1212.3,1165.6 1219.5,1166.1 1226.7,1165.4 1233.9,1165.4 1241.1,1165.9 1248.2,1165.6 1255.5,1165.6 1262.8,1164.8 1270.1,1164.4 1277.4,1163.2 1284.7,1163.6 1292.0,1162.2 1299.3,1162.3 1307.6,1163.4 1316.0,1164.1 1324.3,1164.7 1332.6,1164.9 1340.9,1165.9 1348.9,1165.9 1356.8,1164.9 1364.8,1165.7 1372.8,1165.5 1380.8,1164.8 1388.8,1165.0 1396.8,1165.6 1404.7,1166.4 1412.7,1167.8 1420.7,1168.0 1427.8,1168.8 1434.9,1168.8 1442.0,1167.9 1449.1,1168.5 1456.2,1167.3 1463.3,1168.1 1470.4,1167.3 1477.5,1168.0 1484.6,1167.2 1492.6,1167.5 1500.6,1166.2 1508.5,1166.1 1516.5,1166.7 1524.2,1167.6 1531.9,1168.6 1539.4,1167.3 1546.8,1166.9 1554.3,1166.5 1561.7,1165.5 1569.2,1165.9 1576.7,1165.0 1585.0,1165.9 1593.3,1166.2 1601.6,1166.4 1609.9,1166.8 1618.2,1168.2 1626.2,1167.8 1634.1,1168.8 1642.1,1169.1 1650.1,1169.5 1658.1,1168.9 1666.1,1168.8 1674.1,1169.2 1682.1,1168.5 1690.0,1169.0 1698.0,1168.4 1706.0,1169.2 1714.0,1169.6 1722.0,1170.6 1730.0,1171.0 1738.5,1169.7 1747.0,1168.6 1755.5,1168.0 1763.5,1164.4 1771.5,1159.8 1779.5,1158.7 1787.4,1158.1 1795.1,1158.3 1802.8,1159.1 1810.4,1159.6 1818.1,1159.7 1825.8,1159.5 1837.0,1164.1" fill="none" stroke="#2222f4" stroke-width="5.8" stroke-linejoin="round"/><text x="27.2" y="1205.1" font-size="32.5" fill="#606060" fill-opacity=".95" textLength="47" lengthAdjust="spacingAndGlyphs">-50</text><text x="1150.2" y="1205.1" font-size="32.5" fill="#606060" fill-opacity=".95" textLength="47" lengthAdjust="spacingAndGlyphs">-50</text><text x="2252.2" y="1205.1" font-size="32.5" fill="#606060" fill-opacity=".95" textLength="47" lengthAdjust="spacingAndGlyphs">-50</text><text x="27.2" y="1255.2" font-size="32.5" fill="#606060" fill-opacity=".95" textLength="65.4" lengthAdjust="spacingAndGlyphs">-100</text><text x="1150.2" y="1255.2" font-size="32.5" fill="#606060" fill-opacity=".95" textLength="65.4" lengthAdjust="spacingAndGlyphs">-100</text><text x="2252.2" y="1255.2" font-size="32.5" fill="#606060" fill-opacity=".95" textLength="65.4" lengthAdjust="spacingAndGlyphs">-100</text><text x="27.2" y="1305.4" font-size="32.5" fill="#606060" fill-opacity=".95" textLength="65.4" lengthAdjust="spacingAndGlyphs">-150</text><text x="1150.2" y="1305.4" font-size="32.5" fill="#606060" fill-opacity=".95" textLength="65.4" lengthAdjust="spacingAndGlyphs">-150</text><text x="2252.2" y="1305.4" font-size="32.5" fill="#606060" fill-opacity=".95" textLength="65.4" lengthAdjust="spacingAndGlyphs">-150</text><text x="27.2" y="1355.6" font-size="32.5" fill="#606060" fill-opacity=".95" textLength="65.4" lengthAdjust="spacingAndGlyphs">-200</text><text x="1150.2" y="1355.6" font-size="32.5" fill="#606060" fill-opacity=".95" textLength="65.4" lengthAdjust="spacingAndGlyphs">-200</text><text x="2252.2" y="1355.6" font-size="32.5" fill="#606060" fill-opacity=".95" textLength="65.4" lengthAdjust="spacingAndGlyphs">-200</text><text x="27.2" y="1405.8" font-size="32.5" fill="#606060" fill-opacity=".95" textLength="65.4" lengthAdjust="spacingAndGlyphs">-250</text><text x="1150.2" y="1405.8" font-size="32.5" fill="#606060" fill-opacity=".95" textLength="65.4" lengthAdjust="spacingAndGlyphs">-250</text><text x="2252.2" y="1405.8" font-size="32.5" fill="#606060" fill-opacity=".95" textLength="65.4" lengthAdjust="spacingAndGlyphs">-250</text><text x="27.2" y="1455.9" font-size="32.5" fill="#606060" fill-opacity=".95" textLength="65.4" lengthAdjust="spacingAndGlyphs">-300</text><text x="1150.2" y="1455.9" font-size="32.5" fill="#606060" fill-opacity=".95" textLength="65.4" lengthAdjust="spacingAndGlyphs">-300</text><text x="2252.2" y="1455.9" font-size="32.5" fill="#606060" fill-opacity=".95" textLength="65.4" lengthAdjust="spacingAndGlyphs">-300</text><text x="27.2" y="1506.1" font-size="32.5" fill="#606060" fill-opacity=".95" textLength="65.4" lengthAdjust="spacingAndGlyphs">-350</text><text x="1150.2" y="1506.1" font-size="32.5" fill="#606060" fill-opacity=".95" textLength="65.4" lengthAdjust="spacingAndGlyphs">-350</text><text x="2252.2" y="1506.1" font-size="32.5" fill="#606060" fill-opacity=".95" textLength="65.4" lengthAdjust="spacingAndGlyphs">-350</text><text x="230" y="1507.6" font-size="32" fill="#606060" fill-opacity=".95" textLength="69" lengthAdjust="spacingAndGlyphs">1min</text><text x="1976" y="1507.6" font-size="32" fill="#606060" fill-opacity=".95" textLength="69" lengthAdjust="spacingAndGlyphs">1min</text></svg></div>
<div class="btn" style="top:1370px;height:42px;line-height:45px;font-size:22.3px"><span style="display:inline-block;transform:scaleX(.91);margin-right:1.5px">SCRN</span></div><div class="btn" style="top:1428px;height:45px"><svg width="34" height="34" viewBox="0 0 24 24" style="left:34px;top:5.4px"><path fill="#5f6363" d="M17 3H5a2 2 0 0 0-2 2v14a2 2 0 0 0 2 2h14a2 2 0 0 0 2-2V7l-4-4zm-5 16a3 3 0 1 1 0-6 3 3 0 0 1 0 6zm3-10H5V5h10v4z"/></svg></div><div class="btn" style="top:1489.3px;height:44.7px"><svg width="30" height="30" viewBox="0 0 30 30" style="left:36px;top:7.2px"><path fill="#5f6363" d="M4.6,4 H25.4 Q26.8,4.2 26,5.4 L18.2,15.6 V25 Q18.1,26.2 17,26.3 H13 Q11.9,26.2 11.8,25 V15.6 L4,5.4 Q3.2,4.2 4.6,4Z"/></svg></div><div class="btn" style="top:1534px;left:2553px;height:20px;background:#e0e0e0;box-shadow:none;border-radius:0"><svg width="40" height="12" viewBox="0 0 40 12" style="left:13px;top:0"><path d="M0,2.6H31M0,10.6H31" stroke="#9c9c9c" stroke-width="3.2"/></svg></div></body></html>
